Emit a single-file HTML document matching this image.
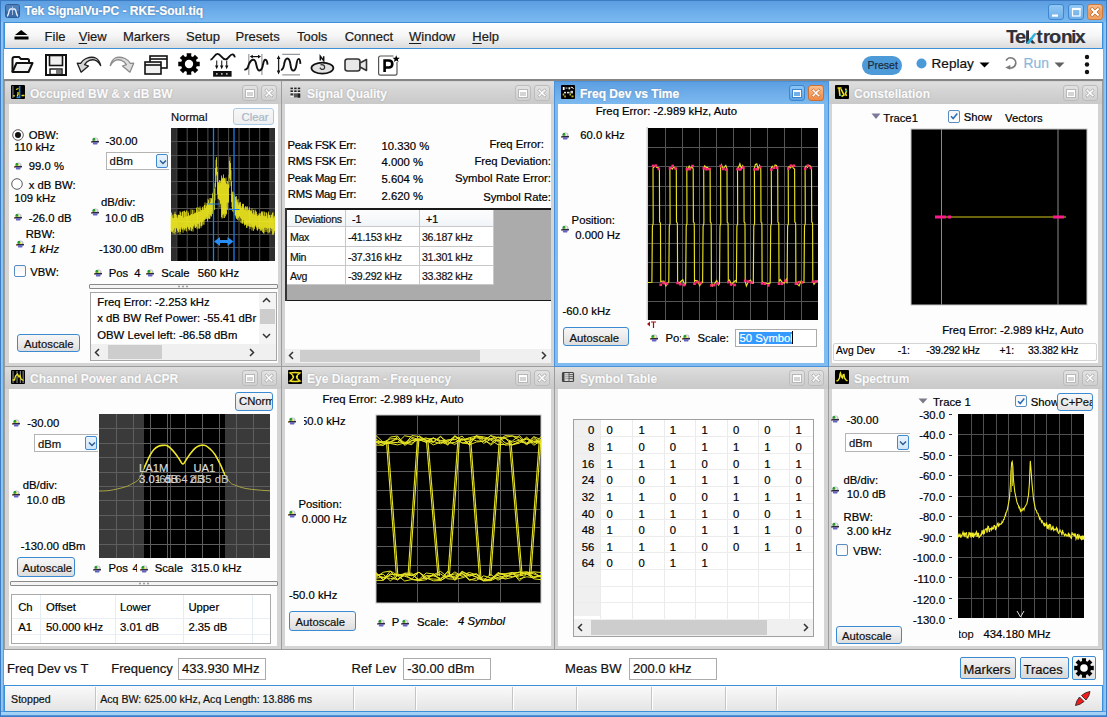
<!DOCTYPE html><html><head><meta charset="utf-8"><style>
html,body{margin:0;padding:0;}
body{width:1107px;height:717px;overflow:hidden;position:relative;background:#6aaae6;font-family:"Liberation Sans",sans-serif;}
.t{position:absolute;white-space:nowrap;line-height:1;-webkit-text-stroke:0.2px currentColor;}
svg{position:absolute;overflow:visible;}
</style></head><body>
<div style="position:absolute;left:0px;top:0px;width:1107px;height:717px;background:#6aaae6;"></div>
<div style="position:absolute;left:0px;top:22px;width:4px;height:695px;background:linear-gradient(90deg,#3c7cc4 0px,#3c7cc4 1px,#92c8f4 1px,#86c0f0 3px,#5c9ee0 3px);"></div>
<div style="position:absolute;left:1103px;top:22px;width:4px;height:695px;background:linear-gradient(90deg,#5c9ee0 0px,#86c0f0 1px,#92c8f4 3px,#3c7cc4 3px);"></div>
<div style="position:absolute;left:0px;top:711px;width:1107px;height:6px;background:linear-gradient(#5c9ee0 0px,#5c9ee0 1px,#a6d2f6 1px,#a0cef4 4px,#6aaae6 4px,#3c7cc4 5px);"></div>
<div style="position:absolute;left:0px;top:0px;width:1px;height:717px;background:#3c7cc4;"></div>
<div style="position:absolute;left:1106px;top:0px;width:1px;height:717px;background:#3c7cc4;"></div>
<div style="position:absolute;left:0px;top:0px;width:1107px;height:1px;background:#3c7cc4;"></div>
<div style="position:absolute;left:1px;top:1px;width:1105px;height:21px;background:linear-gradient(#5b9de0,#6fb0ec 60%,#7ab8ef);"></div>
<div style="position:absolute;left:4px;top:22px;width:1099px;height:689px;background:#f0f0f0;"></div>
<div style="position:absolute;left:4px;top:22px;width:1099px;height:27px;box-sizing:border-box;border:1px solid #3d8fd8;background:linear-gradient(#ffffff,#f6f6f6 50%,#dcdcdc);"></div>
<div style="position:absolute;left:4px;top:49px;width:1099px;height:31px;background:#ffffff;"></div>
<div style="position:absolute;left:4px;top:79px;width:1099px;height:571px;background:#9c9c9c;"></div>
<div style="position:absolute;left:4px;top:79px;width:1099px;height:2px;background:#858585;"></div>
<div style="position:absolute;left:5px;top:81px;width:276px;height:285px;background:#d4d4d4;"></div>
<div style="position:absolute;left:5px;top:82px;width:276px;height:22px;background:linear-gradient(#dedede,#d4d4d4 40%,#c9c9c9);"></div>
<div style="position:absolute;left:9px;top:104px;width:269px;height:259px;background:#fdfdfd;"></div>
<div class="t" style="left:30px;top:87.6px;font-size:12px;font-weight:bold;color:#fbfbfb;text-shadow:0 0 1.5px rgba(90,90,100,0.55);">Occupied BW &amp; x dB BW</div>
<svg width="16" height="16" viewBox="0 0 16 16" style="left:10px;top:84px"><rect x="1" y="1" width="14" height="14" rx="1" fill="#000"/><rect x="2.3" y="2" width="1.2" height="12" fill="#777"/><path d="M9.6 2 V13.5 H6.5" fill="none" stroke="#1e88e0" stroke-width="1.6"/><path d="M3 11.8 H5 M7.5 10.5 V12.5 M11.5 11.5 H14.5 M6 5.5 L8.5 4.5 M8 8 V11" stroke="#e8e020" stroke-width="1.3"/></svg>
<div style="position:absolute;left:242px;top:85px;width:16px;height:16px;box-sizing:border-box;border:1px solid #bcbcbc;border-radius:3px;background:linear-gradient(#e2e2e2,#d0d0d0);"><svg width="16" height="16" style="left:-1px;top:-1px"><rect x="3" y="4" width="10" height="9" fill="#b8b8b8"/><rect x="4" y="5" width="8" height="7" fill="#fff"/><rect x="5" y="7" width="6" height="4" fill="#d4d4d4"/></svg></div>
<div style="position:absolute;left:261px;top:85px;width:16px;height:16px;box-sizing:border-box;border:1px solid #bcbcbc;border-radius:3px;background:linear-gradient(#e2e2e2,#d0d0d0);"><svg width="16" height="16" style="left:-1px;top:-1px"><path d="M12.24 10.69 L10.69 12.24 L8.00 9.56 L5.31 12.24 L3.76 10.69 L6.44 8.00 L3.76 5.31 L5.31 3.76 L8.00 6.44 L10.69 3.76 L12.24 5.31 L9.56 8.00 Z" fill="#fff" stroke="#a8a8a8" stroke-width="0.9" stroke-linejoin="round"/></svg></div>
<div style="position:absolute;left:282px;top:81px;width:272px;height:285px;background:#d4d4d4;"></div>
<div style="position:absolute;left:282px;top:82px;width:272px;height:22px;background:linear-gradient(#dedede,#d4d4d4 40%,#c9c9c9);"></div>
<div style="position:absolute;left:285px;top:104px;width:266px;height:259px;background:#fdfdfd;"></div>
<div class="t" style="left:307px;top:87.6px;font-size:12px;font-weight:bold;color:#fbfbfb;text-shadow:0 0 1.5px rgba(90,90,100,0.55);">Signal Quality</div>
<svg width="16" height="16" viewBox="0 0 16 16" style="left:287px;top:84px"><rect x="3.5" y="3.6" width="2.4" height="1.6" fill="#222"/><rect x="3.5" y="6.4" width="2.4" height="1.6" fill="#222"/><rect x="7.2" y="3.6" width="2.4" height="1.6" fill="#222"/><rect x="7.2" y="6.4" width="2.4" height="1.6" fill="#222"/><rect x="10.8" y="3.6" width="2.4" height="1.6" fill="#222"/><rect x="10.8" y="6.4" width="2.4" height="1.6" fill="#222"/><rect x="3.5" y="8.2" width="9.8" height="0.9" fill="#f4f4f4"/><rect x="3.5" y="9.4" width="2.8" height="2" fill="#333"/><rect x="7" y="9.4" width="6" height="4" fill="#555"/><rect x="10.8" y="9.6" width="2.5" height="4" fill="#222"/><rect x="3.5" y="12" width="2.8" height="1" fill="#f4f4f4"/></svg>
<div style="position:absolute;left:515px;top:85px;width:16px;height:16px;box-sizing:border-box;border:1px solid #bcbcbc;border-radius:3px;background:linear-gradient(#e2e2e2,#d0d0d0);"><svg width="16" height="16" style="left:-1px;top:-1px"><rect x="3" y="4" width="10" height="9" fill="#b8b8b8"/><rect x="4" y="5" width="8" height="7" fill="#fff"/><rect x="5" y="7" width="6" height="4" fill="#d4d4d4"/></svg></div>
<div style="position:absolute;left:534px;top:85px;width:16px;height:16px;box-sizing:border-box;border:1px solid #bcbcbc;border-radius:3px;background:linear-gradient(#e2e2e2,#d0d0d0);"><svg width="16" height="16" style="left:-1px;top:-1px"><path d="M12.24 10.69 L10.69 12.24 L8.00 9.56 L5.31 12.24 L3.76 10.69 L6.44 8.00 L3.76 5.31 L5.31 3.76 L8.00 6.44 L10.69 3.76 L12.24 5.31 L9.56 8.00 Z" fill="#fff" stroke="#a8a8a8" stroke-width="0.9" stroke-linejoin="round"/></svg></div>
<div style="position:absolute;left:554px;top:81px;width:275px;height:286px;background:#4a92dc;"></div>
<div style="position:absolute;left:555px;top:82px;width:273px;height:284px;background:linear-gradient(#5ea2e4,#7ab8ee 20px,#80bcf0);"></div>
<div style="position:absolute;left:555px;top:82px;width:273px;height:22px;background:linear-gradient(#5c9fe2,#74b2ec 70%,#7cb9ee);"></div>
<div style="position:absolute;left:558px;top:104px;width:266px;height:259px;background:#fdfdfd;"></div>
<div class="t" style="left:580px;top:87.6px;font-size:12px;font-weight:bold;color:#ffffff;text-shadow:0 0 1.5px rgba(90,90,100,0.55);">Freq Dev vs Time</div>
<svg width="16" height="16" viewBox="0 0 16 16" style="left:560px;top:84px"><rect x="1" y="1" width="14" height="14" rx="1" fill="#000"/><rect x="2.8" y="3" width="1.8" height="3" fill="#fff"/><rect x="5.5" y="3.6" width="2" height="0.9" fill="#fff"/><rect x="8.5" y="3.3" width="1.5" height="2" fill="#fff"/><path d="M10.5 4 L12 3 L13.5 5" stroke="#eee" stroke-width="1" fill="none"/><rect x="4" y="7.8" width="2" height="1.6" fill="#ddd"/><rect x="7" y="7.8" width="2.5" height="1.6" fill="#ddd"/><rect x="10.5" y="6.8" width="2.5" height="2.6" fill="#ccc"/><rect x="2.7" y="9.5" width="1.5" height="2" fill="#c8c020"/><rect x="4.3" y="11.5" width="1.5" height="2" fill="#c8c020"/><rect x="9.5" y="9.5" width="1.5" height="2" fill="#c8c020"/><rect x="11.5" y="11.5" width="2" height="1.8" fill="#c8c020"/></svg>
<div style="position:absolute;left:789px;top:85px;width:16px;height:16px;box-sizing:border-box;border:1px solid #3c86d0;border-radius:3px;background:linear-gradient(#8cc6f4,#5ea4e4);"><svg width="16" height="16" style="left:-1px;top:-1px"><rect x="3" y="4" width="10" height="9" fill="#3f86cf"/><rect x="4" y="5" width="8" height="7" fill="#fff"/><rect x="5" y="7" width="6" height="4" fill="#70b0ea"/></svg></div>
<div style="position:absolute;left:808px;top:85px;width:16px;height:16px;box-sizing:border-box;border:1px solid #d07030;border-radius:3px;background:linear-gradient(#f8c090,#ec8a48);"><svg width="16" height="16" style="left:-1px;top:-1px"><path d="M12.24 10.69 L10.69 12.24 L8.00 9.56 L5.31 12.24 L3.76 10.69 L6.44 8.00 L3.76 5.31 L5.31 3.76 L8.00 6.44 L10.69 3.76 L12.24 5.31 L9.56 8.00 Z" fill="#fff" stroke="#d06a28" stroke-width="0.9" stroke-linejoin="round"/></svg></div>
<div style="position:absolute;left:829px;top:81px;width:273px;height:285px;background:#d4d4d4;"></div>
<div style="position:absolute;left:829px;top:82px;width:273px;height:22px;background:linear-gradient(#dedede,#d4d4d4 40%,#c9c9c9);"></div>
<div style="position:absolute;left:832px;top:104px;width:266px;height:259px;background:#fdfdfd;"></div>
<div class="t" style="left:854px;top:87.6px;font-size:12px;font-weight:bold;color:#fbfbfb;text-shadow:0 0 1.5px rgba(90,90,100,0.55);">Constellation</div>
<svg width="16" height="16" viewBox="0 0 16 16" style="left:834px;top:84px"><rect x="1" y="1" width="14" height="14" rx="1" fill="#000"/><path d="M3.5 4 L7.5 4 M5 4 L6 12 M7 5 L10 11 L7.5 12.5 M11.5 4.5 L12.5 7 L11.5 9.5 L12.5 12" fill="none" stroke="#f0e020" stroke-width="1.6"/><rect x="11.8" y="6" width="1.2" height="1.4" fill="#30c0a0"/><rect x="6" y="10.5" width="1.2" height="1.2" fill="#40c0a0"/></svg>
<div style="position:absolute;left:1063px;top:85px;width:16px;height:16px;box-sizing:border-box;border:1px solid #bcbcbc;border-radius:3px;background:linear-gradient(#e2e2e2,#d0d0d0);"><svg width="16" height="16" style="left:-1px;top:-1px"><rect x="3" y="4" width="10" height="9" fill="#b8b8b8"/><rect x="4" y="5" width="8" height="7" fill="#fff"/><rect x="5" y="7" width="6" height="4" fill="#d4d4d4"/></svg></div>
<div style="position:absolute;left:1082px;top:85px;width:16px;height:16px;box-sizing:border-box;border:1px solid #bcbcbc;border-radius:3px;background:linear-gradient(#e2e2e2,#d0d0d0);"><svg width="16" height="16" style="left:-1px;top:-1px"><path d="M12.24 10.69 L10.69 12.24 L8.00 9.56 L5.31 12.24 L3.76 10.69 L6.44 8.00 L3.76 5.31 L5.31 3.76 L8.00 6.44 L10.69 3.76 L12.24 5.31 L9.56 8.00 Z" fill="#fff" stroke="#a8a8a8" stroke-width="0.9" stroke-linejoin="round"/></svg></div>
<div style="position:absolute;left:5px;top:367px;width:276px;height:282px;background:#d4d4d4;"></div>
<div style="position:absolute;left:5px;top:367px;width:276px;height:22px;background:linear-gradient(#dedede,#d4d4d4 40%,#c9c9c9);"></div>
<div style="position:absolute;left:9px;top:389px;width:268px;height:257px;background:#fdfdfd;"></div>
<div class="t" style="left:30px;top:372.6px;font-size:12px;font-weight:bold;color:#fbfbfb;text-shadow:0 0 1.5px rgba(90,90,100,0.55);">Channel Power and ACPR</div>
<svg width="16" height="16" viewBox="0 0 16 16" style="left:10px;top:369px"><rect x="1" y="1" width="14" height="14" rx="1" fill="#000"/><rect x="2.5" y="2" width="1.1" height="12" fill="#888"/><rect x="6.5" y="2" width="1.1" height="12" fill="#888"/><rect x="9.8" y="2" width="1.1" height="12" fill="#888"/><rect x="12.6" y="2" width="1.1" height="12" fill="#888"/><path d="M2.5 11 H4.5 L5.5 7 L7.5 5 L9 8 L10 6.5 L11 10 L13.5 11.5" fill="none" stroke="#e8e020" stroke-width="1.3"/></svg>
<div style="position:absolute;left:242px;top:370px;width:16px;height:16px;box-sizing:border-box;border:1px solid #bcbcbc;border-radius:3px;background:linear-gradient(#e2e2e2,#d0d0d0);"><svg width="16" height="16" style="left:-1px;top:-1px"><rect x="3" y="4" width="10" height="9" fill="#b8b8b8"/><rect x="4" y="5" width="8" height="7" fill="#fff"/><rect x="5" y="7" width="6" height="4" fill="#d4d4d4"/></svg></div>
<div style="position:absolute;left:261px;top:370px;width:16px;height:16px;box-sizing:border-box;border:1px solid #bcbcbc;border-radius:3px;background:linear-gradient(#e2e2e2,#d0d0d0);"><svg width="16" height="16" style="left:-1px;top:-1px"><path d="M12.24 10.69 L10.69 12.24 L8.00 9.56 L5.31 12.24 L3.76 10.69 L6.44 8.00 L3.76 5.31 L5.31 3.76 L8.00 6.44 L10.69 3.76 L12.24 5.31 L9.56 8.00 Z" fill="#fff" stroke="#a8a8a8" stroke-width="0.9" stroke-linejoin="round"/></svg></div>
<div style="position:absolute;left:282px;top:367px;width:272px;height:282px;background:#d4d4d4;"></div>
<div style="position:absolute;left:282px;top:367px;width:272px;height:22px;background:linear-gradient(#dedede,#d4d4d4 40%,#c9c9c9);"></div>
<div style="position:absolute;left:285px;top:389px;width:266px;height:257px;background:#fdfdfd;"></div>
<div class="t" style="left:307px;top:372.6px;font-size:12px;font-weight:bold;color:#fbfbfb;text-shadow:0 0 1.5px rgba(90,90,100,0.55);">Eye Diagram - Frequency</div>
<svg width="16" height="16" viewBox="0 0 16 16" style="left:287px;top:369px"><rect x="1" y="1" width="14" height="14" rx="1" fill="#000"/><path d="M3 4 Q8 3 13 4 Q10 6 9.5 8 Q10 10 13 12 Q8 13 3 12 Q6 10 6.5 8 Q6 6 3 4 Z" fill="none" stroke="#f0e020" stroke-width="1.4"/><path d="M5.5 7.5 L7 8.5 M9.5 7.5 H11 M9.5 9 H11" stroke="#f0e020" stroke-width="1"/></svg>
<div style="position:absolute;left:515px;top:370px;width:16px;height:16px;box-sizing:border-box;border:1px solid #bcbcbc;border-radius:3px;background:linear-gradient(#e2e2e2,#d0d0d0);"><svg width="16" height="16" style="left:-1px;top:-1px"><rect x="3" y="4" width="10" height="9" fill="#b8b8b8"/><rect x="4" y="5" width="8" height="7" fill="#fff"/><rect x="5" y="7" width="6" height="4" fill="#d4d4d4"/></svg></div>
<div style="position:absolute;left:534px;top:370px;width:16px;height:16px;box-sizing:border-box;border:1px solid #bcbcbc;border-radius:3px;background:linear-gradient(#e2e2e2,#d0d0d0);"><svg width="16" height="16" style="left:-1px;top:-1px"><path d="M12.24 10.69 L10.69 12.24 L8.00 9.56 L5.31 12.24 L3.76 10.69 L6.44 8.00 L3.76 5.31 L5.31 3.76 L8.00 6.44 L10.69 3.76 L12.24 5.31 L9.56 8.00 Z" fill="#fff" stroke="#a8a8a8" stroke-width="0.9" stroke-linejoin="round"/></svg></div>
<div style="position:absolute;left:555px;top:367px;width:273px;height:282px;background:#d4d4d4;"></div>
<div style="position:absolute;left:555px;top:367px;width:273px;height:22px;background:linear-gradient(#dedede,#d4d4d4 40%,#c9c9c9);"></div>
<div style="position:absolute;left:558px;top:389px;width:266px;height:257px;background:#fdfdfd;"></div>
<div class="t" style="left:580px;top:372.6px;font-size:12px;font-weight:bold;color:#fbfbfb;text-shadow:0 0 1.5px rgba(90,90,100,0.55);">Symbol Table</div>
<svg width="16" height="16" viewBox="0 0 16 16" style="left:560px;top:369px"><rect x="2.5" y="3.5" width="11" height="9" fill="#d8d8d8" stroke="#444" stroke-width="1.2" rx="1"/><rect x="2.5" y="3.5" width="2" height="9" fill="#444"/><path d="M4.5 5.6 H13 M4.5 7.6 H13 M4.5 9.6 H13 M9 3.5 V12.5" stroke="#555" stroke-width="0.9"/><path d="M4.5 5.6 H8.5 M4.5 7.6 H8.5 M4.5 9.6 H8.5" stroke="#f8f8f8" stroke-width="0.5"/></svg>
<div style="position:absolute;left:789px;top:370px;width:16px;height:16px;box-sizing:border-box;border:1px solid #bcbcbc;border-radius:3px;background:linear-gradient(#e2e2e2,#d0d0d0);"><svg width="16" height="16" style="left:-1px;top:-1px"><rect x="3" y="4" width="10" height="9" fill="#b8b8b8"/><rect x="4" y="5" width="8" height="7" fill="#fff"/><rect x="5" y="7" width="6" height="4" fill="#d4d4d4"/></svg></div>
<div style="position:absolute;left:808px;top:370px;width:16px;height:16px;box-sizing:border-box;border:1px solid #bcbcbc;border-radius:3px;background:linear-gradient(#e2e2e2,#d0d0d0);"><svg width="16" height="16" style="left:-1px;top:-1px"><path d="M12.24 10.69 L10.69 12.24 L8.00 9.56 L5.31 12.24 L3.76 10.69 L6.44 8.00 L3.76 5.31 L5.31 3.76 L8.00 6.44 L10.69 3.76 L12.24 5.31 L9.56 8.00 Z" fill="#fff" stroke="#a8a8a8" stroke-width="0.9" stroke-linejoin="round"/></svg></div>
<div style="position:absolute;left:829px;top:367px;width:273px;height:282px;background:#d4d4d4;"></div>
<div style="position:absolute;left:829px;top:367px;width:273px;height:22px;background:linear-gradient(#dedede,#d4d4d4 40%,#c9c9c9);"></div>
<div style="position:absolute;left:832px;top:389px;width:266px;height:257px;background:#fdfdfd;"></div>
<div class="t" style="left:854px;top:372.6px;font-size:12px;font-weight:bold;color:#fbfbfb;text-shadow:0 0 1.5px rgba(90,90,100,0.55);">Spectrum</div>
<svg width="16" height="16" viewBox="0 0 16 16" style="left:834px;top:369px"><rect x="1" y="1" width="14" height="14" rx="1" fill="#000"/><path d="M2.5 12 L4 11.5 L5.5 9 L6 5 L6.5 4 L7.5 8 L8.5 9 L9 6 L10 5.5 L10.5 9 L12 11 L13.5 12" fill="none" stroke="#e8e020" stroke-width="1.4"/></svg>
<div style="position:absolute;left:1063px;top:370px;width:16px;height:16px;box-sizing:border-box;border:1px solid #bcbcbc;border-radius:3px;background:linear-gradient(#e2e2e2,#d0d0d0);"><svg width="16" height="16" style="left:-1px;top:-1px"><rect x="3" y="4" width="10" height="9" fill="#b8b8b8"/><rect x="4" y="5" width="8" height="7" fill="#fff"/><rect x="5" y="7" width="6" height="4" fill="#d4d4d4"/></svg></div>
<div style="position:absolute;left:1082px;top:370px;width:16px;height:16px;box-sizing:border-box;border:1px solid #bcbcbc;border-radius:3px;background:linear-gradient(#e2e2e2,#d0d0d0);"><svg width="16" height="16" style="left:-1px;top:-1px"><path d="M12.24 10.69 L10.69 12.24 L8.00 9.56 L5.31 12.24 L3.76 10.69 L6.44 8.00 L3.76 5.31 L5.31 3.76 L8.00 6.44 L10.69 3.76 L12.24 5.31 L9.56 8.00 Z" fill="#fff" stroke="#a8a8a8" stroke-width="0.9" stroke-linejoin="round"/></svg></div>
<svg width="15" height="14" viewBox="0 0 15 14" style="left:5px;top:4px;"><rect x="0.5" y="0.5" width="14" height="13" rx="2" fill="#3a6aa8" stroke="#2f5d96"/><rect x="1" y="1" width="13" height="6" rx="1" fill="#4f80bc"/><path d="M2 12 C4 12 3.5 5 5.5 5 L9.5 5 C11.5 5 11 12 13 12" stroke="#e8f0fa" stroke-width="1.3" fill="none"/><path d="M7.5 2.5 V11" stroke="#c8d8ee" stroke-width="0.8"/></svg>
<div class="t" style="left:24.5px;top:5.14px;font-size:12px;color:#ffffff;font-weight:bold;text-shadow:0 0 2px rgba(20,50,100,0.6);">Tek SignalVu-PC - RKE-Soul.tiq</div>
<div style="position:absolute;left:1048px;top:4px;width:16px;height:16px;box-sizing:border-box;border:1px solid #3f86cf;border-radius:3px;background:linear-gradient(#90c8f4,#6eaeea);"><svg width="16" height="16" style="left:-1px;top:-1px"><rect x="4" y="10.5" width="6" height="2.2" fill="#fff"/></svg></div>
<div style="position:absolute;left:1068px;top:4px;width:16px;height:16px;box-sizing:border-box;border:1px solid #3f86cf;border-radius:3px;background:linear-gradient(#90c8f4,#6eaeea);"><svg width="16" height="16" style="left:-1px;top:-1px"><rect x="4.5" y="4.5" width="7.5" height="7.5" fill="none" stroke="#fff" stroke-width="1.2"/><rect x="4" y="4" width="8.5" height="2" fill="#fff"/></svg></div>
<div style="position:absolute;left:1087px;top:4px;width:16px;height:16px;box-sizing:border-box;border:1px solid #c87a40;border-radius:3px;background:linear-gradient(#f6bc8c,#ee9a5c 55%,#f0a468);"><svg width="16" height="16" style="left:-1px;top:-1px"><path d="M12.77 10.86 L10.86 12.77 L8.00 9.91 L5.14 12.77 L3.23 10.86 L6.09 8.00 L3.23 5.14 L5.14 3.23 L8.00 6.09 L10.86 3.23 L12.77 5.14 L9.91 8.00 Z" fill="#fff" stroke="#c8742e" stroke-width="1" stroke-linejoin="round"/></svg></div>
<svg width="15" height="11" viewBox="0 0 15 11" style="left:14px;top:29px;"><path d="M7.2 1 L13.5 6 L1 6 Z" fill="#000"/><rect x="0.5" y="7.5" width="14" height="3" fill="#000"/></svg>
<div class="t" style="left:44.6px;top:29.50px;font-size:13px;color:#1a1a1a;font-weight:normal;">File</div>
<div class="t" style="left:78.7px;top:29.50px;font-size:13px;color:#1a1a1a;font-weight:normal;"><u style="text-decoration-thickness:1px;text-underline-offset:2px">V</u>iew</div>
<div class="t" style="left:122.9px;top:29.50px;font-size:13px;color:#1a1a1a;font-weight:normal;">Markers</div>
<div class="t" style="left:186.1px;top:29.50px;font-size:13px;color:#1a1a1a;font-weight:normal;">Setup</div>
<div class="t" style="left:235.6px;top:29.50px;font-size:13px;color:#1a1a1a;font-weight:normal;">Presets</div>
<div class="t" style="left:297px;top:29.50px;font-size:13px;color:#1a1a1a;font-weight:normal;">Tools</div>
<div class="t" style="left:344.7px;top:29.50px;font-size:13px;color:#1a1a1a;font-weight:normal;">Connect</div>
<div class="t" style="left:409px;top:29.50px;font-size:13px;color:#1a1a1a;font-weight:normal;"><u style="text-decoration-thickness:1px;text-underline-offset:2px">W</u>indow</div>
<div class="t" style="left:472.3px;top:29.50px;font-size:13px;color:#1a1a1a;font-weight:normal;"><u style="text-decoration-thickness:1px;text-underline-offset:2px">H</u>elp</div>
<div class="t" style="left:1006.2px;top:27.99px;font-size:18.2px;color:#2e3139;font-weight:bold;transform:scaleX(1.0);transform-origin:0 0;">T</div>
<div class="t" style="left:1014.9px;top:27.99px;font-size:18.2px;color:#2e3139;font-weight:bold;transform:scaleX(1.1);transform-origin:0 0;">e</div>
<div class="t" style="left:1036.5px;top:27.99px;font-size:18.2px;color:#2e3139;font-weight:bold;transform:scaleX(1.0);transform-origin:0 0;">t</div>
<div class="t" style="left:1043px;top:27.99px;font-size:18.2px;color:#2e3139;font-weight:bold;transform:scaleX(1.0);transform-origin:0 0;">r</div>
<div class="t" style="left:1049.4px;top:27.99px;font-size:18.2px;color:#2e3139;font-weight:bold;transform:scaleX(1.1);transform-origin:0 0;">o</div>
<div class="t" style="left:1061.3px;top:27.99px;font-size:18.2px;color:#2e3139;font-weight:bold;transform:scaleX(1.05);transform-origin:0 0;">n</div>
<div class="t" style="left:1071.3px;top:27.99px;font-size:18.2px;color:#2e3139;font-weight:bold;transform:scaleX(1.0);transform-origin:0 0;">i</div>
<div class="t" style="left:1075.2px;top:27.99px;font-size:18.2px;color:#2e3139;font-weight:bold;transform:scaleX(1.05);transform-origin:0 0;">x</div>
<svg width="14" height="15" viewBox="0 0 14 15" style="left:1025px;top:29.6px;"><rect x="1.1" y="0.4" width="2.9" height="13.2" fill="#2e3139"/><path d="M5.4 7.8 L10.5 13.6 H7 L4 10 Z" fill="#2e3139"/><path d="M1.1 13.6 L4.7 13.6 L11.9 3.3 L9 3.3 Z" fill="#2cb4e0"/></svg>
<svg width="23" height="19" viewBox="0 0 23 19" style="left:11px;top:55px;"><path d="M1.5 17 V4 Q1.5 2 3.5 2 H8 L10 4 H16.5 Q18 4 18 5.5 V7" fill="none" stroke="#111" stroke-width="2"/><path d="M1.5 17 L5.5 8 H21.5 L17.5 17 Z" fill="#f2f2f2" stroke="#111" stroke-width="2" stroke-linejoin="round"/></svg>
<svg width="22" height="22" viewBox="0 0 22 22" style="left:45px;top:54px;"><rect x="1" y="1" width="20" height="20" fill="#fff" stroke="#111" stroke-width="2"/><rect x="4.5" y="1.5" width="13" height="10" fill="#efefef" stroke="#111" stroke-width="1.6"/><rect x="5" y="15" width="12" height="5.5" fill="#fff" stroke="#111" stroke-width="1.4"/><rect x="11" y="16" width="5" height="4" fill="#777"/></svg>
<svg width="26" height="20" viewBox="0 0 26 20" style="left:77px;top:55px;"><path d="M23.7 10.6 Q21 -1 9 3.5 Q5 5.5 3.6 8.4 L0.3 8.2 L4.1 17.2 L11.5 11 L7.6 9.6 Q9.5 6.5 12.5 5.3 Q19.5 3 23.7 10.6 Z" fill="#d4d4d4" stroke="#1e1e1e" stroke-width="1.3" stroke-linejoin="round"/></svg>
<svg width="26" height="20" viewBox="0 0 26 20" style="left:110px;top:55px;"><path d="M0.3 10.6 Q3 -1 15 3.5 Q19 5.5 20.4 8.4 L23.7 8.2 L19.9 17.2 L12.5 11 L16.4 9.6 Q14.5 6.5 11.5 5.3 Q4.5 3 0.3 10.6 Z" fill="#dedede" stroke="#8c8c8c" stroke-width="1.3" stroke-linejoin="round"/></svg>
<svg width="24" height="20" viewBox="0 0 24 20" style="left:144px;top:55px;"><rect x="6" y="1" width="17" height="12" fill="#fff" stroke="#111" stroke-width="1.6"/><line x1="6" y1="4" x2="23" y2="4" stroke="#111" stroke-width="1.6"/><rect x="1" y="7" width="16" height="12" fill="#f0f0f0" stroke="#111" stroke-width="1.6"/><line x1="1" y1="10" x2="17" y2="10" stroke="#111" stroke-width="1.6"/></svg>
<svg width="24" height="22" viewBox="0 0 24 22" style="left:177px;top:53px;"><path d="M19.71 8.87 L22.74 8.64 L22.74 13.36 L19.71 13.13 L18.96 14.94 L21.26 16.93 L17.93 20.26 L15.94 17.96 L14.13 18.71 L14.36 21.74 L9.64 21.74 L9.87 18.71 L8.06 17.96 L6.07 20.26 L2.74 16.93 L5.04 14.94 L4.29 13.13 L1.26 13.36 L1.26 8.64 L4.29 8.87 L5.04 7.06 L2.74 5.07 L6.07 1.74 L8.06 4.04 L9.87 3.29 L9.64 0.26 L14.36 0.26 L14.13 3.29 L15.94 4.04 L17.93 1.74 L21.26 5.07 L18.96 7.06 Z" fill="#000"/><circle cx="12" cy="11" r="7.5" fill="#000"/><circle cx="12" cy="11" r="4.2" fill="#fff"/></svg>
<svg width="28" height="26" viewBox="0 0 28 26" style="left:209px;top:51px;"><path d="M1.4 8.6 C4 8.8 5.5 2.8 8.6 2.9 C12 3 13 8.6 16.5 8.4 C20 8.2 20.5 3 23.5 3.3 C25 3.5 25.6 5 25.9 6.4" fill="none" stroke="#111" stroke-width="1.8"/><path d="M7.7 9.5 V15 M12.7 9.5 V15 M17.7 9.5 V15" stroke="#333" stroke-width="1.2"/><path d="M6 14.5 L7.7 18.3 L9.4 14.5 Z M11 14.5 L12.7 18.3 L14.4 14.5 Z M16 14.5 L17.7 18.3 L19.4 14.5 Z" fill="#111"/><rect x="4.1" y="20" width="18.5" height="5.7" fill="#111"/><rect x="7" y="22.2" width="1.6" height="1.4" fill="#ddd"/><rect x="12" y="22.2" width="1.6" height="1.4" fill="#ddd"/><rect x="17" y="22.2" width="1.6" height="1.4" fill="#ddd"/></svg>
<svg width="26" height="26" viewBox="0 0 26 26" style="left:243px;top:51px;"><path d="M5.8 2.9 V24.1 M18.9 2.9 V24.1" stroke="#999" stroke-width="1.2"/><path d="M1.3 18.6 Q4.5 19 5.6 14 Q7.5 8.6 10.5 8.7 Q12.5 8.8 13.5 14.5 Q14.5 19.6 16.5 19.5 Q19 19.4 20 13.5 Q21 8.6 22.5 8.8 Q24 9 24.6 13.6" fill="none" stroke="#111" stroke-width="1.9"/><path d="M8.5 5.6 H16.3" stroke="#111" stroke-width="1.2"/><path d="M6.8 5.6 L9.8 3.8 V7.4 Z M18 5.6 L15 3.8 V7.4 Z" fill="#111"/></svg>
<svg width="26" height="26" viewBox="0 0 26 26" style="left:277px;top:51px;"><path d="M5.2 3.3 H23 M5.2 23.9 H23" stroke="#999" stroke-width="1.3"/><path d="M1.6 7 V21" stroke="#222" stroke-width="1.3"/><path d="M1.6 4.2 L-0.2 8 H3.4 Z M1.6 23.4 L-0.2 19.6 H3.4 Z" fill="#111"/><path d="M3.9 18.7 Q6 19 7 14 Q8 7.4 10.5 7.5 Q12.8 7.6 13.5 14 Q14.3 19.6 16.2 19.6 Q18.6 19.5 19.5 13.5 Q20.3 7.7 21.8 7.9 Q23 8.1 23.4 12.8" fill="none" stroke="#111" stroke-width="1.9"/></svg>
<svg width="25" height="24" viewBox="0 0 25 24" style="left:310px;top:52px;"><ellipse cx="12.4" cy="16.1" rx="11" ry="5.5" fill="#e2e2e2" stroke="#111" stroke-width="1.7"/><path d="M10.3 8.6 V4.2 L13.7 8.6 V4.2" fill="none" stroke="#111" stroke-width="1.5" stroke-linejoin="miter"/><path d="M10.5 12.8 Q14.5 12.2 14.6 15.2 Q14.6 17.6 11.5 17.4 L9.8 15.8" fill="none" stroke="#333" stroke-width="1.3"/></svg>
<svg width="24" height="14" viewBox="0 0 24 14" style="left:344px;top:58px;"><rect x="1" y="1" width="15" height="12" rx="2.5" fill="#e8e8e8" stroke="#333" stroke-width="1.6"/><path d="M16 5 L22.5 1.5 V12.5 L16 9 Z" fill="#e8e8e8" stroke="#333" stroke-width="1.6" stroke-linejoin="round"/></svg>
<svg width="23" height="22" viewBox="0 0 23 22" style="left:378px;top:55px;"><path d="M15.5 1 H2.5 Q0.6 1 0.6 2.9 V18.2 Q0.6 20.1 2.5 20.1 H17.1 Q19 20.1 19 18.2 V7" fill="#fff" stroke="#555" stroke-width="1.2"/><path d="M6.6 17 V5.5 H10.8 Q14.3 5.5 14.3 9 Q14.3 12.5 10.8 12.5 H6.6" fill="none" stroke="#000" stroke-width="2.6"/><path d="M18.2 0.3 L19.2 2.7 L21.8 2.8 L19.8 4.4 L20.5 6.9 L18.2 5.5 L15.9 6.9 L16.6 4.4 L14.6 2.8 L17.2 2.7 Z" fill="#000"/></svg>
<div style="position:absolute;left:861.5px;top:55.5px;width:40px;height:19px;border-radius:10px;background:#4c9ad8;"></div>
<div class="t" style="left:867.5px;top:60.41px;font-size:10.5px;color:#1c2a3a;font-weight:normal;">Preset</div>
<svg width="11" height="11" viewBox="0 0 11 11" style="left:916px;top:58px;"><circle cx="5.5" cy="5.5" r="5" fill="#4a9ad8"/></svg>
<div class="t" style="left:931.5px;top:57.09px;font-size:13.6px;color:#111;font-weight:normal;">Replay</div>
<svg width="11" height="6" viewBox="0 0 11 6" style="left:979px;top:62px;"><path d="M0.5 0.5 H10.5 L5.5 5.5 Z" fill="#000"/></svg>
<svg width="14" height="14" viewBox="0 0 14 14" style="left:1004px;top:56px;"><path d="M2.1 4.6 A5.1 5.1 0 1 1 5.2 11.8" fill="none" stroke="#7a7a7a" stroke-width="1.7"/><path d="M1.2 11.4 L6.4 9 L6.3 13.8 Z" fill="#7a7a7a"/></svg>
<div class="t" style="left:1023.5px;top:57.22px;font-size:13.8px;color:#8cb8dc;font-weight:normal;">Run</div>
<svg width="11" height="6" viewBox="0 0 11 6" style="left:1053.5px;top:62px;"><path d="M0.5 0.5 H10.5 L5.5 5.5 Z" fill="#606060"/></svg>
<svg width="6" height="22" viewBox="0 0 6 22" style="left:1084px;top:54px;"><circle cx="3" cy="3" r="2.2" fill="#111"/><circle cx="3" cy="10.5" r="2.2" fill="#111"/><circle cx="3" cy="18" r="2.2" fill="#111"/></svg>
<div class="t" style="left:171px;top:111.83px;font-size:11.3px;color:#111;font-weight:normal;">Normal</div>
<div style="position:absolute;left:233px;top:107.5px;width:41px;height:17px;box-sizing:border-box;border:1px solid #a9cbe8;border-radius:3px;background:linear-gradient(#f8f8f8,#eeeeee);"></div>
<div class="t" style="left:241.5px;top:111.73px;font-size:11.3px;color:#a8b8c8;font-weight:normal;">Clear</div>
<svg width="12" height="12" viewBox="0 0 12 12" style="left:11.5px;top:128.5px;"><circle cx="6" cy="6" r="5.3" fill="#fff" stroke="#5a5a5a" stroke-width="1"/><circle cx="6" cy="6" r="3" fill="#111"/></svg>
<div class="t" style="left:28.8px;top:129.63px;font-size:11.3px;color:#000;font-weight:normal;">OBW:</div>
<div class="t" style="left:14.3px;top:142.43px;font-size:11.3px;color:#000;font-weight:normal;">110 kHz</div>
<svg width="8" height="8" viewBox="0 0 8 8" style="left:14px;top:161.5px;"><ellipse cx="4.3" cy="3.4" rx="3.2" ry="3" fill="#b4b8c4"/><ellipse cx="4.8" cy="2.6" rx="1.6" ry="1.3" fill="#e8eaf0"/><circle cx="3" cy="2.4" r="1.4" fill="#1c9a22"/><circle cx="4.4" cy="3.2" r="0.8" fill="#e4e040"/><rect x="0" y="4.1" width="8" height="1.3" fill="#1a1a34"/><rect x="0" y="4.1" width="1.2" height="1.3" fill="#a07030"/><path d="M1.6 5.4 H6.8 L6.2 7.4 H2.2 Z" fill="#6464c8"/></svg>
<div class="t" style="left:28.8px;top:160.63px;font-size:11.3px;color:#000;font-weight:normal;">99.0 %</div>
<svg width="12" height="12" viewBox="0 0 12 12" style="left:11.399999999999999px;top:178.2px;"><circle cx="6" cy="6" r="5.3" fill="#fff" stroke="#5a5a5a" stroke-width="1"/></svg>
<div class="t" style="left:28.8px;top:179.93px;font-size:11.3px;color:#000;font-weight:normal;">x dB BW:</div>
<div class="t" style="left:14.3px;top:192.83px;font-size:11.3px;color:#000;font-weight:normal;">109 kHz</div>
<svg width="8" height="8" viewBox="0 0 8 8" style="left:14px;top:213.0px;"><ellipse cx="4.3" cy="3.4" rx="3.2" ry="3" fill="#b4b8c4"/><ellipse cx="4.8" cy="2.6" rx="1.6" ry="1.3" fill="#e8eaf0"/><circle cx="3" cy="2.4" r="1.4" fill="#1c9a22"/><circle cx="4.4" cy="3.2" r="0.8" fill="#e4e040"/><rect x="0" y="4.1" width="8" height="1.3" fill="#1a1a34"/><rect x="0" y="4.1" width="1.2" height="1.3" fill="#a07030"/><path d="M1.6 5.4 H6.8 L6.2 7.4 H2.2 Z" fill="#6464c8"/></svg>
<div class="t" style="left:28.8px;top:212.53px;font-size:11.3px;color:#000;font-weight:normal;">-26.0 dB</div>
<div class="t" style="left:25.7px;top:228.93px;font-size:11.3px;color:#000;font-weight:normal;">RBW:</div>
<svg width="8" height="8" viewBox="0 0 8 8" style="left:15.600000000000001px;top:239.5px;"><ellipse cx="4.3" cy="3.4" rx="3.2" ry="3" fill="#b4b8c4"/><ellipse cx="4.8" cy="2.6" rx="1.6" ry="1.3" fill="#e8eaf0"/><circle cx="3" cy="2.4" r="1.4" fill="#1c9a22"/><circle cx="4.4" cy="3.2" r="0.8" fill="#e4e040"/><rect x="0" y="4.1" width="8" height="1.3" fill="#1a1a34"/><rect x="0" y="4.1" width="1.2" height="1.3" fill="#a07030"/><path d="M1.6 5.4 H6.8 L6.2 7.4 H2.2 Z" fill="#6464c8"/></svg>
<div class="t" style="left:30.2px;top:243.93px;font-size:11.3px;color:#000;font-weight:normal;"><i>1 kHz</i></div>
<div style="position:absolute;left:14px;top:265px;width:12px;height:12px;box-sizing:border-box;border:1px solid #5a8cc4;border-radius:2px;background:linear-gradient(#f4f4f4,#ffffff);"></div>
<div class="t" style="left:30.2px;top:267.33px;font-size:11.3px;color:#000;font-weight:normal;">VBW:</div>
<svg width="8" height="8" viewBox="0 0 8 8" style="left:91px;top:136.8px;"><ellipse cx="4.3" cy="3.4" rx="3.2" ry="3" fill="#b4b8c4"/><ellipse cx="4.8" cy="2.6" rx="1.6" ry="1.3" fill="#e8eaf0"/><circle cx="3" cy="2.4" r="1.4" fill="#1c9a22"/><circle cx="4.4" cy="3.2" r="0.8" fill="#e4e040"/><rect x="0" y="4.1" width="8" height="1.3" fill="#1a1a34"/><rect x="0" y="4.1" width="1.2" height="1.3" fill="#a07030"/><path d="M1.6 5.4 H6.8 L6.2 7.4 H2.2 Z" fill="#6464c8"/></svg>
<div class="t" style="left:105.6px;top:135.73px;font-size:11.3px;color:#000;font-weight:normal;">-30.00</div>
<div style="position:absolute;left:105.5px;top:151.5px;width:63.5px;height:18.0px;box-sizing:border-box;border:1px solid #b4b4b4;border-right:none;background:#fff;"></div>
<div style="position:absolute;left:156px;top:153.5px;width:12px;height:14.0px;box-sizing:border-box;border:1px solid #3f8ad2;border-radius:2px;background:linear-gradient(#eaf4fc,#cfe6f8);"><svg width="10" height="10" style="left:0.5px;top:2px"><path d="M2 3.5 L5 6.5 L8 3.5" fill="none" stroke="#2a5a90" stroke-width="1.4"/></svg></div>
<div class="t" style="left:109.6px;top:156.13px;font-size:11.3px;color:#111;font-weight:normal;">dBm</div>
<div class="t" style="left:100.9px;top:197.13px;font-size:11.3px;color:#000;font-weight:normal;">dB/div:</div>
<svg width="8" height="8" viewBox="0 0 8 8" style="left:90.5px;top:208.3px;"><ellipse cx="4.3" cy="3.4" rx="3.2" ry="3" fill="#b4b8c4"/><ellipse cx="4.8" cy="2.6" rx="1.6" ry="1.3" fill="#e8eaf0"/><circle cx="3" cy="2.4" r="1.4" fill="#1c9a22"/><circle cx="4.4" cy="3.2" r="0.8" fill="#e4e040"/><rect x="0" y="4.1" width="8" height="1.3" fill="#1a1a34"/><rect x="0" y="4.1" width="1.2" height="1.3" fill="#a07030"/><path d="M1.6 5.4 H6.8 L6.2 7.4 H2.2 Z" fill="#6464c8"/></svg>
<div class="t" style="left:105.1px;top:212.53px;font-size:11.3px;color:#000;font-weight:normal;">10.0 dB</div>
<div class="t" style="left:99px;top:244.33px;font-size:11.3px;color:#000;font-weight:normal;">-130.00 dBm</div>
<svg width="8" height="8" viewBox="0 0 8 8" style="left:94.2px;top:269.2px;"><ellipse cx="4.3" cy="3.4" rx="3.2" ry="3" fill="#b4b8c4"/><ellipse cx="4.8" cy="2.6" rx="1.6" ry="1.3" fill="#e8eaf0"/><circle cx="3" cy="2.4" r="1.4" fill="#1c9a22"/><circle cx="4.4" cy="3.2" r="0.8" fill="#e4e040"/><rect x="0" y="4.1" width="8" height="1.3" fill="#1a1a34"/><rect x="0" y="4.1" width="1.2" height="1.3" fill="#a07030"/><path d="M1.6 5.4 H6.8 L6.2 7.4 H2.2 Z" fill="#6464c8"/></svg>
<div class="t" style="left:108.8px;top:268.13px;font-size:11.3px;color:#000;font-weight:normal;">Pos</div>
<div class="t" style="left:134.2px;top:268.13px;font-size:11.3px;color:#000;font-weight:normal;">4:</div>
<div style="position:absolute;left:141px;top:266px;width:7px;height:13px;background:#fdfdfd;"></div>
<svg width="8" height="8" viewBox="0 0 8 8" style="left:146.1px;top:269.2px;"><ellipse cx="4.3" cy="3.4" rx="3.2" ry="3" fill="#b4b8c4"/><ellipse cx="4.8" cy="2.6" rx="1.6" ry="1.3" fill="#e8eaf0"/><circle cx="3" cy="2.4" r="1.4" fill="#1c9a22"/><circle cx="4.4" cy="3.2" r="0.8" fill="#e4e040"/><rect x="0" y="4.1" width="8" height="1.3" fill="#1a1a34"/><rect x="0" y="4.1" width="1.2" height="1.3" fill="#a07030"/><path d="M1.6 5.4 H6.8 L6.2 7.4 H2.2 Z" fill="#6464c8"/></svg>
<div class="t" style="left:161.3px;top:268.13px;font-size:11.3px;color:#000;font-weight:normal;">Scale</div>
<div class="t" style="left:197.7px;top:268.13px;font-size:11.3px;color:#000;font-weight:normal;">560 kHz</div>
<div style="position:absolute;left:88.5px;top:283.5px;width:189.0px;height:5px;box-sizing:border-box;border:1px solid #8a8a8a;border-radius:1px;background:#f4f4f4;"></div>
<svg width="12" height="3" viewBox="0 0 12 3" style="left:177.0px;top:284.5px;"><circle cx="2" cy="1.5" r="1" fill="#9a9a9a"/><circle cx="6" cy="1.5" r="1" fill="#9a9a9a"/><circle cx="10" cy="1.5" r="1" fill="#9a9a9a"/></svg>
<div style="position:absolute;left:89.5px;top:291.5px;width:187px;height:69.5px;box-sizing:border-box;border:1px solid #a5a5a5;background:#fff;"></div>
<div class="t" style="left:97.3px;top:296.83px;font-size:11.3px;color:#000;font-weight:normal;">Freq Error: -2.253 kHz</div>
<div class="t" style="left:97.3px;top:313.23px;font-size:11.3px;color:#000;font-weight:normal;">x dB BW Ref Power: -55.41 dBr</div>
<div class="t" style="left:97.3px;top:329.73px;font-size:11.3px;color:#000;font-weight:normal;">OBW Level left: -86.58 dBm</div>
<div style="position:absolute;left:258.5px;top:292.5px;width:17px;height:51px;background:#f4f4f4;"></div>
<div style="position:absolute;left:259.5px;top:308.5px;width:15px;height:15.5px;background:#cdcdcd;"></div>
<svg width="9" height="6" viewBox="0 0 9 6" style="left:262px;top:297px;"><path d="M1 5 L4.5 1.5 L8 5" fill="none" stroke="#333" stroke-width="1.5"/></svg>
<svg width="9" height="6" viewBox="0 0 9 6" style="left:262px;top:333px;"><path d="M1 1 L4.5 4.5 L8 1" fill="none" stroke="#333" stroke-width="1.5"/></svg>
<div style="position:absolute;left:90.5px;top:344px;width:168.0px;height:16px;background:#f0f0f0;"></div>
<div style="position:absolute;left:107.5px;top:345px;width:54.5px;height:14px;background:#cdcdcd;"></div>
<svg width="6" height="9" viewBox="0 0 6 9" style="left:93.5px;top:347.5px;"><path d="M5 1 L1.5 4.5 L5 8" fill="none" stroke="#333" stroke-width="1.5"/></svg>
<svg width="6" height="9" viewBox="0 0 6 9" style="left:248.5px;top:347.5px;"><path d="M1 1 L4.5 4.5 L1 8" fill="none" stroke="#333" stroke-width="1.5"/></svg>
<div style="position:absolute;left:258.5px;top:344px;width:17px;height:16px;background:#f0f0f0;"></div>
<div style="position:absolute;left:16.5px;top:333.5px;width:63.0px;height:18.5px;box-sizing:border-box;border:1px solid #3c8ad2;border-radius:3px;background:linear-gradient(#f6f6f6,#ececec 50%,#dcdcdc);"></div>
<div class="t" style="left:24px;top:338.53px;font-size:11.3px;color:#111;font-weight:normal;">Autoscale</div>
<svg width="104" height="133" viewBox="0 0 104 133" style="left:171px;top:127.5px;"><rect x="0" y="0" width="104" height="133" fill="#000"/><rect x="0" y="0" width="5" height="133" fill="#2e2e2e"/><rect x="99.5" y="0" width="4.5" height="133" fill="#2e2e2e"/><line x1="5.8" y1="0" x2="5.8" y2="133" stroke="#505050" stroke-width="1"/><line x1="16.2" y1="0" x2="16.2" y2="133" stroke="#505050" stroke-width="1"/><line x1="26.5" y1="0" x2="26.5" y2="133" stroke="#505050" stroke-width="1"/><line x1="36.9" y1="0" x2="36.9" y2="133" stroke="#505050" stroke-width="1"/><line x1="47.2" y1="0" x2="47.2" y2="133" stroke="#505050" stroke-width="1"/><line x1="57.6" y1="0" x2="57.6" y2="133" stroke="#505050" stroke-width="1"/><line x1="68.0" y1="0" x2="68.0" y2="133" stroke="#505050" stroke-width="1"/><line x1="78.3" y1="0" x2="78.3" y2="133" stroke="#505050" stroke-width="1"/><line x1="88.7" y1="0" x2="88.7" y2="133" stroke="#505050" stroke-width="1"/><line x1="99.0" y1="0" x2="99.0" y2="133" stroke="#505050" stroke-width="1"/><line x1="0" y1="13.5" x2="104" y2="13.5" stroke="#505050" stroke-width="1"/><line x1="0" y1="27.5" x2="104" y2="27.5" stroke="#505050" stroke-width="1"/><line x1="0" y1="40.5" x2="104" y2="40.5" stroke="#505050" stroke-width="1"/><line x1="0" y1="53.5" x2="104" y2="53.5" stroke="#505050" stroke-width="1"/><line x1="0" y1="66.5" x2="104" y2="66.5" stroke="#505050" stroke-width="1"/><line x1="0" y1="80.5" x2="104" y2="80.5" stroke="#505050" stroke-width="1"/><line x1="0" y1="93.5" x2="104" y2="93.5" stroke="#505050" stroke-width="1"/><line x1="0" y1="106.5" x2="104" y2="106.5" stroke="#505050" stroke-width="1"/><line x1="0" y1="119.5" x2="104" y2="119.5" stroke="#505050" stroke-width="1"/><path d="M0.0 87.8V103.9M0.5 84.5V103.2M1.0 87.4V104.0M1.5 89.6V103.5M2.0 86.4V105.4M2.5 90.1V101.9M3.0 90.1V105.4M3.5 85.9V100.0M4.0 83.8V106.4M4.5 86.0V103.9M5.0 89.5V99.7M5.5 86.8V99.9M6.0 89.1V101.2M6.5 90.2V102.7M7.0 87.3V105.3M7.5 86.7V103.8M8.0 86.8V103.9M8.5 87.0V101.1M9.0 83.2V106.1M9.5 84.2V104.0M10.0 87.8V100.6M10.5 87.9V99.4M11.0 84.5V101.7M11.5 83.9V101.5M12.0 83.0V104.7M12.5 89.6V100.1M13.0 83.2V101.9M13.5 82.6V101.3M14.0 88.9V102.8M14.5 83.9V100.2M15.0 88.6V100.6M15.5 82.4V103.4M16.0 88.2V99.8M16.5 88.2V98.4M17.0 83.3V99.1M17.5 84.8V100.9M18.0 87.3V102.7M18.5 87.6V102.0M19.0 87.6V100.3M19.5 86.8V99.1M20.0 81.3V102.7M20.5 85.9V103.2M21.0 86.4V99.6M21.5 81.7V101.2M22.0 86.8V103.5M22.5 85.9V98.2M23.0 81.8V98.5M23.5 85.0V96.6M24.0 86.2V99.9M24.5 85.0V99.9M25.0 83.9V98.7M25.5 79.6V98.7M26.0 82.0V101.1M26.5 84.6V95.9M27.0 79.2V100.3M27.5 83.6V95.7M28.0 79.9V100.7M28.5 83.5V100.5M29.0 78.4V97.8M29.5 81.3V94.0M30.0 83.7V99.7M30.5 82.0V97.6M31.0 81.5V98.1M31.5 78.8V94.0M32.0 81.3V96.6M32.5 81.7V92.8M33.0 77.8V96.7M33.5 77.0V92.3M34.0 74.5V91.3M34.5 80.3V91.3M35.0 76.8V89.3M35.5 78.1V91.0M36.0 74.8V88.7M36.5 75.7V93.5M37.0 70.8V91.2M37.5 72.2V90.1M38.0 75.4V85.6M38.5 75.5V91.0M39.0 70.0V90.6M39.5 74.0V87.6M40.0 70.0V87.4M40.5 70.3V88.5M41.0 71.1V84.4M41.5 65.6V86.0M42.0 64.6V83.7M42.5 63.3V84.2M43.0 65.3V81.6M43.5 60.5V81.9M44.0 55.0V72.4M44.5 40.2V59.2M45.0 31.7V47.8M45.5 29.1V46.5M46.0 39.0V53.1M46.5 44.0V66.1M47.0 54.2V71.0M47.5 54.3V70.4M48.0 56.8V71.6M48.5 52.3V72.2M49.0 52.2V79.7M49.5 54.8V76.1M50.0 53.1V75.2M50.5 47.5V89.0M51.0 50.4V90.5M51.5 50.4V86.9M52.0 49.5V90.1M52.5 46.4V86.0M53.0 51.3V87.5M53.5 50.0V90.0M54.0 50.7V85.2M54.5 54.1V88.4M55.0 49.5V85.8M55.5 55.6V86.4M56.0 56.3V75.0M56.5 53.0V82.1M57.0 57.1V73.7M57.5 56.2V74.7M58.0 46.7V60.0M58.5 32.8V50.4M59.0 28.7V47.3M59.5 35.0V52.3M60.0 42.2V58.2M60.5 53.5V74.1M61.0 66.1V79.2M61.5 63.6V83.4M62.0 66.4V82.0M62.5 63.8V84.5M63.0 64.3V83.1M63.5 67.2V82.2M64.0 67.6V87.4M64.5 69.0V87.5M65.0 72.8V89.6M65.5 68.2V90.9M66.0 72.0V90.3M66.5 74.2V91.8M67.0 71.1V88.6M67.5 77.2V89.9M68.0 74.5V92.7M68.5 75.5V88.1M69.0 73.8V88.9M69.5 74.4V90.2M70.0 78.2V95.0M70.5 80.0V91.0M71.0 77.8V95.5M71.5 76.0V95.7M72.0 75.6V94.7M72.5 76.0V92.2M73.0 81.5V95.7M73.5 81.3V97.5M74.0 79.2V96.4M74.5 78.1V96.9M75.0 82.1V96.0M75.5 78.7V99.9M76.0 83.4V99.8M76.5 78.4V97.8M77.0 81.4V95.8M77.5 81.9V98.2M78.0 81.6V95.1M78.5 79.3V98.7M79.0 83.5V100.9M79.5 82.6V99.0M80.0 81.9V96.2M80.5 83.1V98.8M81.0 80.4V102.5M81.5 85.4V99.6M82.0 86.5V99.5M82.5 81.9V102.9M83.0 84.4V98.9M83.5 86.5V101.2M84.0 81.5V97.9M84.5 82.7V97.3M85.0 86.9V98.9M85.5 83.6V99.7M86.0 86.0V101.9M86.5 87.9V102.8M87.0 87.9V101.3M87.5 87.1V99.2M88.0 85.2V101.0M88.5 86.4V101.0M89.0 85.5V99.3M89.5 87.8V102.7M90.0 84.9V102.0M90.5 83.5V102.7M91.0 83.5V100.1M91.5 84.4V104.3M92.0 83.3V100.9M92.5 87.5V105.2M93.0 88.3V105.8M93.5 83.7V99.8M94.0 88.3V104.0M94.5 88.2V99.7M95.0 84.3V102.0M95.5 84.6V100.0M96.0 87.4V104.0M96.5 90.1V100.7M97.0 85.5V105.7M97.5 83.6V100.2M98.0 86.9V104.7M98.5 87.0V104.3M99.0 89.2V100.0M99.5 89.8V99.8M100.0 86.8V103.2M100.5 86.7V100.7M101.0 89.4V101.1M101.5 84.9V106.7M102.0 84.3V100.5M102.5 90.4V106.5M103.0 87.7V105.2M103.5 88.6V103.2" stroke="#f4ee22" stroke-width="0.75" fill="none"/><line x1="42.5" y1="0" x2="42.5" y2="133" stroke="#1e7ee8" stroke-width="1.3"/><line x1="63" y1="0" x2="63" y2="133" stroke="#1e7ee8" stroke-width="1.3"/><line x1="37" y1="76" x2="48" y2="76" stroke="#1e7ee8" stroke-width="1"/><line x1="57.5" y1="81.5" x2="68.5" y2="81.5" stroke="#1e7ee8" stroke-width="1"/><path d="M43 113.5 L49 109 V118 Z M62.5 113.5 L56.5 109 V118 Z" fill="#2a8cf0"/><rect x="48" y="112" width="9" height="3" fill="#2a8cf0"/></svg>
<div class="t" style="right:751px;top:139.83px;font-size:11.3px;color:#000;font-weight:normal;text-align:right;letter-spacing:-0.28px">Peak FSK Err:</div>
<div class="t" style="left:381.5px;top:141.03px;font-size:11.3px;color:#000;font-weight:normal;">10.330 %</div>
<div class="t" style="right:751px;top:156.23px;font-size:11.3px;color:#000;font-weight:normal;text-align:right;letter-spacing:-0.28px">RMS FSK Err:</div>
<div class="t" style="left:381.5px;top:157.43px;font-size:11.3px;color:#000;font-weight:normal;">4.000 %</div>
<div class="t" style="right:751px;top:173.03px;font-size:11.3px;color:#000;font-weight:normal;text-align:right;letter-spacing:-0.28px">Peak Mag Err:</div>
<div class="t" style="left:381.5px;top:174.23px;font-size:11.3px;color:#000;font-weight:normal;">5.604 %</div>
<div class="t" style="right:751px;top:189.43px;font-size:11.3px;color:#000;font-weight:normal;text-align:right;letter-spacing:-0.28px">RMS Mag Err:</div>
<div class="t" style="left:381.5px;top:190.63px;font-size:11.3px;color:#000;font-weight:normal;">2.620 %</div>
<div class="t" style="right:563px;top:138.73px;font-size:11.3px;color:#000;font-weight:normal;text-align:right;">Freq Error:</div>
<div class="t" style="right:556px;top:156.03px;font-size:11.3px;color:#000;font-weight:normal;text-align:right;">Freq Deviation:</div>
<div class="t" style="right:556px;top:173.03px;font-size:11.3px;color:#000;font-weight:normal;text-align:right;">Symbol Rate Error:</div>
<div class="t" style="right:556px;top:191.73px;font-size:11.3px;color:#000;font-weight:normal;text-align:right;">Symbol Rate:</div>
<div style="position:absolute;left:285px;top:208px;width:266px;height:93px;background:#ababab;"></div>
<div style="position:absolute;left:285px;top:208px;width:266px;height:1.5px;background:#1a1a1a;"></div>
<div style="position:absolute;left:285px;top:299.5px;width:266px;height:1.5px;background:#1a1a1a;"></div>
<div style="position:absolute;left:285px;top:208px;width:1.5px;height:93px;background:#333;"></div>
<div style="position:absolute;left:286.5px;top:209.5px;width:206.5px;height:75px;background:#fff;"></div>
<div style="position:absolute;left:286.5px;top:209.5px;width:206.5px;height:17px;background:linear-gradient(#fdfdfd,#f0f4f8);"></div>
<div style="position:absolute;left:286.5px;top:226px;width:206.5px;height:1px;background:#c8c8c8;"></div>
<div style="position:absolute;left:286.5px;top:245.5px;width:206.5px;height:1px;background:#c8c8c8;"></div>
<div style="position:absolute;left:286.5px;top:265px;width:206.5px;height:1px;background:#c8c8c8;"></div>
<div style="position:absolute;left:286.5px;top:284px;width:206.5px;height:1px;background:#c8c8c8;"></div>
<div style="position:absolute;left:345px;top:209.5px;width:1px;height:75px;background:#c8c8c8;"></div>
<div style="position:absolute;left:419px;top:209.5px;width:1px;height:75px;background:#c8c8c8;"></div>
<div style="position:absolute;left:492.5px;top:209.5px;width:1px;height:75px;background:#c8c8c8;"></div>
<div class="t" style="left:294.5px;top:213.83px;font-size:10.6px;color:#111;font-weight:normal;letter-spacing:-0.2px">Deviations</div>
<div class="t" style="left:352px;top:213.83px;font-size:10.6px;color:#000;font-weight:normal;">-1</div>
<div class="t" style="left:426px;top:213.83px;font-size:10.6px;color:#000;font-weight:normal;">+1</div>
<div class="t" style="left:290px;top:232.33px;font-size:10.6px;color:#111;font-weight:normal;letter-spacing:-0.3px">Max</div>
<div class="t" style="left:348px;top:232.33px;font-size:10.6px;color:#111;font-weight:normal;letter-spacing:-0.3px">-41.153 kHz</div>
<div class="t" style="left:422px;top:232.33px;font-size:10.6px;color:#111;font-weight:normal;letter-spacing:-0.3px">36.187 kHz</div>
<div class="t" style="left:290px;top:251.83px;font-size:10.6px;color:#111;font-weight:normal;letter-spacing:-0.3px">Min</div>
<div class="t" style="left:348px;top:251.83px;font-size:10.6px;color:#111;font-weight:normal;letter-spacing:-0.3px">-37.316 kHz</div>
<div class="t" style="left:422px;top:251.83px;font-size:10.6px;color:#111;font-weight:normal;letter-spacing:-0.3px">31.301 kHz</div>
<div class="t" style="left:290px;top:270.83px;font-size:10.6px;color:#111;font-weight:normal;letter-spacing:-0.3px">Avg</div>
<div class="t" style="left:348px;top:270.83px;font-size:10.6px;color:#111;font-weight:normal;letter-spacing:-0.3px">-39.292 kHz</div>
<div class="t" style="left:422px;top:270.83px;font-size:10.6px;color:#111;font-weight:normal;letter-spacing:-0.3px">33.382 kHz</div>
<div style="position:absolute;left:285px;top:348.5px;width:266px;height:14.5px;background:#f0f0f0;"></div>
<div style="position:absolute;left:300px;top:349.5px;width:180px;height:12.5px;background:#cdcdcd;"></div>
<svg width="6" height="9" viewBox="0 0 6 9" style="left:288px;top:351.25px;"><path d="M5 1 L1.5 4.5 L5 8" fill="none" stroke="#333" stroke-width="1.5"/></svg>
<svg width="6" height="9" viewBox="0 0 6 9" style="left:541px;top:351.25px;"><path d="M1 1 L4.5 4.5 L1 8" fill="none" stroke="#333" stroke-width="1.5"/></svg>
<div class="t" style="left:595.7px;top:106.03px;font-size:11.3px;color:#000;font-weight:normal;">Freq Error: -2.989 kHz, Auto</div>
<svg width="8" height="8" viewBox="0 0 8 8" style="left:561.4px;top:132.4px;"><ellipse cx="4.3" cy="3.4" rx="3.2" ry="3" fill="#b4b8c4"/><ellipse cx="4.8" cy="2.6" rx="1.6" ry="1.3" fill="#e8eaf0"/><circle cx="3" cy="2.4" r="1.4" fill="#1c9a22"/><circle cx="4.4" cy="3.2" r="0.8" fill="#e4e040"/><rect x="0" y="4.1" width="8" height="1.3" fill="#1a1a34"/><rect x="0" y="4.1" width="1.2" height="1.3" fill="#a07030"/><path d="M1.6 5.4 H6.8 L6.2 7.4 H2.2 Z" fill="#6464c8"/></svg>
<div class="t" style="left:580.2px;top:130.03px;font-size:11.3px;color:#000;font-weight:normal;">60.0 kHz</div>
<div class="t" style="left:571.6px;top:215.23px;font-size:11.3px;color:#000;font-weight:normal;">Position:</div>
<svg width="8" height="8" viewBox="0 0 8 8" style="left:561.4px;top:225.2px;"><ellipse cx="4.3" cy="3.4" rx="3.2" ry="3" fill="#b4b8c4"/><ellipse cx="4.8" cy="2.6" rx="1.6" ry="1.3" fill="#e8eaf0"/><circle cx="3" cy="2.4" r="1.4" fill="#1c9a22"/><circle cx="4.4" cy="3.2" r="0.8" fill="#e4e040"/><rect x="0" y="4.1" width="8" height="1.3" fill="#1a1a34"/><rect x="0" y="4.1" width="1.2" height="1.3" fill="#a07030"/><path d="M1.6 5.4 H6.8 L6.2 7.4 H2.2 Z" fill="#6464c8"/></svg>
<div class="t" style="left:575.3px;top:229.93px;font-size:11.3px;color:#000;font-weight:normal;">0.000 Hz</div>
<div class="t" style="left:562.4px;top:305.83px;font-size:11.3px;color:#000;font-weight:normal;">-60.0 kHz</div>
<div style="position:absolute;left:562.5px;top:327px;width:66.0px;height:19px;box-sizing:border-box;border:1px solid #3c8ad2;border-radius:3px;background:linear-gradient(#f6f6f6,#ececec 50%,#dcdcdc);"></div>
<div class="t" style="left:569.5px;top:332.73px;font-size:11.3px;color:#111;font-weight:normal;">Autoscale</div>
<svg width="10" height="7" viewBox="0 0 10 7" style="left:647px;top:321px;"><path d="M0 3 L3 0.5 V5.5 Z" fill="#a01010"/><path d="M4 1 H9 M6.5 1 V7" stroke="#a01010" stroke-width="1.2"/></svg>
<svg width="8" height="8" viewBox="0 0 8 8" style="left:650px;top:333.8px;"><ellipse cx="4.3" cy="3.4" rx="3.2" ry="3" fill="#b4b8c4"/><ellipse cx="4.8" cy="2.6" rx="1.6" ry="1.3" fill="#e8eaf0"/><circle cx="3" cy="2.4" r="1.4" fill="#1c9a22"/><circle cx="4.4" cy="3.2" r="0.8" fill="#e4e040"/><rect x="0" y="4.1" width="8" height="1.3" fill="#1a1a34"/><rect x="0" y="4.1" width="1.2" height="1.3" fill="#a07030"/><path d="M1.6 5.4 H6.8 L6.2 7.4 H2.2 Z" fill="#6464c8"/></svg>
<div class="t" style="left:665.4px;top:332.83px;font-size:11.3px;color:#000;font-weight:normal;">Po:</div>
<div style="position:absolute;left:681px;top:330px;width:4px;height:14px;background:#fdfdfd;"></div>
<svg width="8" height="8" viewBox="0 0 8 8" style="left:682.3px;top:333.8px;"><ellipse cx="4.3" cy="3.4" rx="3.2" ry="3" fill="#b4b8c4"/><ellipse cx="4.8" cy="2.6" rx="1.6" ry="1.3" fill="#e8eaf0"/><circle cx="3" cy="2.4" r="1.4" fill="#1c9a22"/><circle cx="4.4" cy="3.2" r="0.8" fill="#e4e040"/><rect x="0" y="4.1" width="8" height="1.3" fill="#1a1a34"/><rect x="0" y="4.1" width="1.2" height="1.3" fill="#a07030"/><path d="M1.6 5.4 H6.8 L6.2 7.4 H2.2 Z" fill="#6464c8"/></svg>
<div class="t" style="left:697.5px;top:332.83px;font-size:11.3px;color:#000;font-weight:normal;">Scale:</div>
<div style="position:absolute;left:735px;top:328.5px;width:82px;height:18.0px;box-sizing:border-box;border:1px solid #ababab;background:#fff;"></div>
<div style="position:absolute;left:739px;top:331.5px;width:53.5px;height:12px;background:#3399ff;"></div>
<div class="t" style="left:739.5px;top:333.03px;font-size:11.3px;color:#fff;font-weight:normal;">50 Symbol</div>
<div style="position:absolute;left:792px;top:331px;width:1px;height:13px;background:#000;"></div>
<svg width="170" height="192" viewBox="0 0 170 192" style="left:647.5px;top:128px;"><rect x="0" y="0" width="170" height="192" fill="#000"/><line x1="17.5" y1="0" x2="17.5" y2="192" stroke="#555555" stroke-width="1"/><line x1="34.5" y1="0" x2="34.5" y2="192" stroke="#555555" stroke-width="1"/><line x1="51.5" y1="0" x2="51.5" y2="192" stroke="#555555" stroke-width="1"/><line x1="68.5" y1="0" x2="68.5" y2="192" stroke="#555555" stroke-width="1"/><line x1="85.5" y1="0" x2="85.5" y2="192" stroke="#555555" stroke-width="1"/><line x1="102.5" y1="0" x2="102.5" y2="192" stroke="#555555" stroke-width="1"/><line x1="119.5" y1="0" x2="119.5" y2="192" stroke="#555555" stroke-width="1"/><line x1="136.5" y1="0" x2="136.5" y2="192" stroke="#555555" stroke-width="1"/><line x1="153.5" y1="0" x2="153.5" y2="192" stroke="#555555" stroke-width="1"/><line x1="0" y1="19.5" x2="170" y2="19.5" stroke="#555555" stroke-width="1"/><line x1="0" y1="38.5" x2="170" y2="38.5" stroke="#555555" stroke-width="1"/><line x1="0" y1="58.5" x2="170" y2="58.5" stroke="#555555" stroke-width="1"/><line x1="0" y1="77.5" x2="170" y2="77.5" stroke="#555555" stroke-width="1"/><line x1="0" y1="96.5" x2="170" y2="96.5" stroke="#555555" stroke-width="1"/><line x1="0" y1="115.5" x2="170" y2="115.5" stroke="#555555" stroke-width="1"/><line x1="0" y1="134.5" x2="170" y2="134.5" stroke="#555555" stroke-width="1"/><line x1="0" y1="154.5" x2="170" y2="154.5" stroke="#555555" stroke-width="1"/><line x1="0" y1="173.5" x2="170" y2="173.5" stroke="#555555" stroke-width="1"/><path d="M0.0 154.5 L3.9 154.2 L4.4 98.0 L5.1 96.0 L5.2 94.0 L5.0 40.0 L6.0 39.0 L7.4 37.9 L8.8 39.4 L10.2 39.6 L11.4 41.0 L11.6 94.0 L12.4 95.0 L12.5 99.0 L12.7 153.5 L13.9 153.2 L15.9 153.0 L17.9 158.0 L19.9 154.6 L20.8 154.0 L21.3 98.0 L22.0 96.0 L22.1 94.0 L21.9 40.0 L22.9 39.6 L24.3 41.1 L25.7 38.9 L27.1 40.3 L28.3 41.0 L28.5 94.0 L29.3 95.0 L29.4 99.0 L29.6 153.5 L30.8 155.3 L32.8 153.5 L34.8 151.7 L36.8 157.1 L37.7 155.6 L38.2 98.0 L38.9 96.0 L39.0 94.0 L38.8 40.0 L39.8 41.5 L41.2 38.1 L42.6 40.7 L44.0 38.4 L45.2 41.0 L45.4 94.0 L46.2 95.0 L46.3 99.0 L46.5 153.5 L47.7 152.4 L49.7 152.9 L51.7 157.8 L53.7 154.3 L54.6 154.7 L55.1 98.0 L55.8 96.0 L55.9 94.0 L55.7 40.0 L56.7 37.8 L58.1 39.3 L59.5 39.3 L60.9 41.4 L62.1 41.0 L62.3 94.0 L63.1 95.0 L63.2 99.0 L63.4 153.5 L64.6 157.9 L66.6 155.9 L68.6 152.6 L70.6 157.1 L71.5 155.6 L72.0 98.0 L72.7 96.0 L72.8 94.0 L72.6 40.0 L73.6 36.9 L75.0 40.9 L76.4 39.2 L77.8 37.4 L79.0 41.0 L79.2 94.0 L80.0 95.0 L80.1 99.0 L80.3 153.5 L81.5 152.1 L83.5 156.7 L85.5 154.2 L87.5 152.5 L88.4 153.6 L88.9 98.0 L89.6 96.0 L89.7 94.0 L89.5 40.0 L90.5 39.5 L91.9 35.8 L93.3 40.2 L94.7 37.7 L95.9 41.0 L96.1 94.0 L96.9 95.0 L97.0 99.0 L97.2 153.5 L98.4 158.0 L100.4 153.5 L102.4 152.0 L104.4 155.4 L105.3 155.3 L105.8 98.0 L106.5 96.0 L106.6 94.0 L106.4 40.0 L107.4 36.5 L108.8 35.8 L110.2 41.1 L111.6 37.5 L112.8 41.0 L113.0 94.0 L113.8 95.0 L113.9 99.0 L114.1 153.5 L115.3 154.5 L117.3 154.9 L119.3 155.7 L121.3 155.4 L122.2 155.0 L122.7 98.0 L123.4 96.0 L123.5 94.0 L123.3 40.0 L124.3 38.3 L125.7 40.2 L127.1 37.0 L128.5 37.5 L129.7 41.0 L129.9 94.0 L130.7 95.0 L130.8 99.0 L131.0 153.5 L132.2 151.6 L134.2 154.2 L136.2 155.3 L138.2 151.6 L139.1 155.4 L139.6 98.0 L140.3 96.0 L140.4 94.0 L140.2 40.0 L141.2 38.5 L142.6 39.9 L144.0 37.8 L145.4 40.1 L146.6 41.0 L146.8 94.0 L147.6 95.0 L147.7 99.0 L147.9 153.5 L149.1 155.9 L151.1 157.8 L153.1 153.1 L155.1 154.5 L156.0 154.4 L156.5 98.0 L157.2 96.0 L157.3 94.0 L157.1 40.0 L158.1 37.9 L159.5 39.4 L160.9 37.5 L162.3 38.0 L163.5 41.0 L163.7 94.0 L164.5 95.0 L164.6 99.0 L164.8 153.5 L166.0 156.3 L168.0 153.5 L170.0 152.9" fill="none" stroke="#e8e020" stroke-width="1.15"/><rect x="-1.5" y="-1" width="1.5" height="193" fill="#d0d0d0"/><rect x="3.8" y="36.6" width="2.6" height="2.6" fill="#ff2a7a"/><rect x="6.5" y="36.4" width="2.6" height="2.6" fill="#ff2a7a"/><rect x="9.5" y="39.6" width="2.6" height="2.6" fill="#ff2a7a"/><rect x="11.4" y="155.5" width="2.6" height="2.6" fill="#ff2a7a"/><rect x="14.2" y="153.7" width="2.6" height="2.6" fill="#ff2a7a"/><rect x="17.7" y="154.5" width="2.6" height="2.6" fill="#ff2a7a"/><rect x="20.7" y="39.0" width="2.6" height="2.6" fill="#ff2a7a"/><rect x="23.4" y="36.6" width="2.6" height="2.6" fill="#ff2a7a"/><rect x="26.4" y="39.3" width="2.6" height="2.6" fill="#ff2a7a"/><rect x="28.3" y="153.7" width="2.6" height="2.6" fill="#ff2a7a"/><rect x="31.1" y="154.9" width="2.6" height="2.6" fill="#ff2a7a"/><rect x="34.6" y="155.7" width="2.6" height="2.6" fill="#ff2a7a"/><rect x="37.6" y="40.0" width="2.6" height="2.6" fill="#ff2a7a"/><rect x="40.3" y="39.8" width="2.6" height="2.6" fill="#ff2a7a"/><rect x="43.3" y="36.7" width="2.6" height="2.6" fill="#ff2a7a"/><rect x="45.2" y="154.4" width="2.6" height="2.6" fill="#ff2a7a"/><rect x="48.0" y="152.8" width="2.6" height="2.6" fill="#ff2a7a"/><rect x="51.5" y="153.8" width="2.6" height="2.6" fill="#ff2a7a"/><rect x="54.5" y="39.0" width="2.6" height="2.6" fill="#ff2a7a"/><rect x="57.2" y="40.0" width="2.6" height="2.6" fill="#ff2a7a"/><rect x="60.2" y="39.7" width="2.6" height="2.6" fill="#ff2a7a"/><rect x="62.1" y="156.1" width="2.6" height="2.6" fill="#ff2a7a"/><rect x="64.9" y="155.8" width="2.6" height="2.6" fill="#ff2a7a"/><rect x="68.4" y="154.1" width="2.6" height="2.6" fill="#ff2a7a"/><rect x="71.4" y="36.6" width="2.6" height="2.6" fill="#ff2a7a"/><rect x="74.1" y="39.7" width="2.6" height="2.6" fill="#ff2a7a"/><rect x="77.1" y="40.3" width="2.6" height="2.6" fill="#ff2a7a"/><rect x="79.0" y="152.8" width="2.6" height="2.6" fill="#ff2a7a"/><rect x="81.8" y="155.1" width="2.6" height="2.6" fill="#ff2a7a"/><rect x="85.3" y="155.7" width="2.6" height="2.6" fill="#ff2a7a"/><rect x="88.3" y="39.8" width="2.6" height="2.6" fill="#ff2a7a"/><rect x="91.0" y="40.2" width="2.6" height="2.6" fill="#ff2a7a"/><rect x="94.0" y="38.3" width="2.6" height="2.6" fill="#ff2a7a"/><rect x="95.9" y="151.5" width="2.6" height="2.6" fill="#ff2a7a"/><rect x="98.7" y="152.3" width="2.6" height="2.6" fill="#ff2a7a"/><rect x="102.2" y="153.3" width="2.6" height="2.6" fill="#ff2a7a"/><rect x="105.2" y="40.1" width="2.6" height="2.6" fill="#ff2a7a"/><rect x="107.9" y="39.9" width="2.6" height="2.6" fill="#ff2a7a"/><rect x="110.9" y="37.8" width="2.6" height="2.6" fill="#ff2a7a"/><rect x="112.8" y="154.1" width="2.6" height="2.6" fill="#ff2a7a"/><rect x="115.6" y="154.4" width="2.6" height="2.6" fill="#ff2a7a"/><rect x="119.1" y="156.0" width="2.6" height="2.6" fill="#ff2a7a"/><rect x="122.1" y="40.2" width="2.6" height="2.6" fill="#ff2a7a"/><rect x="124.8" y="38.4" width="2.6" height="2.6" fill="#ff2a7a"/><rect x="127.8" y="38.5" width="2.6" height="2.6" fill="#ff2a7a"/><rect x="129.7" y="154.4" width="2.6" height="2.6" fill="#ff2a7a"/><rect x="132.5" y="154.5" width="2.6" height="2.6" fill="#ff2a7a"/><rect x="136.0" y="151.6" width="2.6" height="2.6" fill="#ff2a7a"/><rect x="139.0" y="39.3" width="2.6" height="2.6" fill="#ff2a7a"/><rect x="141.7" y="36.4" width="2.6" height="2.6" fill="#ff2a7a"/><rect x="144.7" y="36.5" width="2.6" height="2.6" fill="#ff2a7a"/><rect x="146.6" y="154.3" width="2.6" height="2.6" fill="#ff2a7a"/><rect x="149.4" y="152.9" width="2.6" height="2.6" fill="#ff2a7a"/><rect x="152.9" y="153.1" width="2.6" height="2.6" fill="#ff2a7a"/><rect x="155.9" y="39.4" width="2.6" height="2.6" fill="#ff2a7a"/><rect x="158.6" y="36.4" width="2.6" height="2.6" fill="#ff2a7a"/><rect x="161.6" y="38.6" width="2.6" height="2.6" fill="#ff2a7a"/><rect x="163.5" y="152.5" width="2.6" height="2.6" fill="#ff2a7a"/><rect x="166.3" y="152.2" width="2.6" height="2.6" fill="#ff2a7a"/></svg>
<svg width="10" height="7" viewBox="0 0 10 7" style="left:871px;top:113px;"><path d="M0.5 0.5 H9.5 L5 6 Z" fill="#7a7a9a"/></svg>
<div class="t" style="left:883.2px;top:112.73px;font-size:11.3px;color:#000;font-weight:normal;">Trace1</div>
<div style="position:absolute;left:947.5px;top:110px;width:12.5px;height:12.5px;box-sizing:border-box;border:1px solid #5a8cc4;border-radius:2px;background:linear-gradient(#f4f4f4,#ffffff);"><svg width="12.5" height="12.5" style="left:-1px;top:-1px"><path d="M3 6.2 L5.2 8.6 L9.3 3.6" fill="none" stroke="#2a6cb8" stroke-width="1.5"/></svg></div>
<div class="t" style="left:963.7px;top:111.93px;font-size:11.3px;color:#000;font-weight:normal;">Show</div>
<div class="t" style="left:1005px;top:112.73px;font-size:11.3px;color:#000;font-weight:normal;">Vectors</div>
<svg width="176" height="176" viewBox="0 0 176 176" style="left:910.5px;top:128.5px;"><rect x="0" y="0" width="176" height="176" fill="#000" stroke="#c8c8c8" stroke-width="1"/><line x1="30.5" y1="0" x2="30.5" y2="176" stroke="#8a8a8a"/><line x1="147" y1="0" x2="147" y2="176" stroke="#8a8a8a"/><line x1="24" y1="88" x2="155" y2="88" stroke="#d8c818" stroke-width="1.2"/><rect x="24" y="86.5" width="11" height="3" fill="#ff1a8c"/><rect x="37" y="86.5" width="3" height="3" fill="#ff1a8c"/><rect x="142" y="86.5" width="11" height="3" fill="#ff1a8c"/></svg>
<div class="t" style="left:942.2px;top:324.63px;font-size:11.3px;color:#000;font-weight:normal;">Freq Error: -2.989 kHz, Auto</div>
<div style="position:absolute;left:833px;top:342.5px;width:264px;height:18.5px;box-sizing:border-box;border:1px solid #d4d4d4;border-radius:2px;background:#fff;"></div>
<div class="t" style="left:836.1px;top:346.38px;font-size:10.3px;color:#000;font-weight:normal;">Avg Dev</div>
<div class="t" style="left:897.8px;top:346.38px;font-size:10.3px;color:#000;font-weight:normal;">-1:</div>
<div class="t" style="left:926.3px;top:346.38px;font-size:10.3px;color:#000;font-weight:normal;letter-spacing:-0.2px">-39.292 kHz</div>
<div class="t" style="left:999.5px;top:346.38px;font-size:10.3px;color:#000;font-weight:normal;">+1:</div>
<div class="t" style="left:1028px;top:346.38px;font-size:10.3px;color:#000;font-weight:normal;letter-spacing:-0.2px">33.382 kHz</div>
<div style="position:absolute;left:234.5px;top:392px;width:38px;height:18.5px;box-sizing:border-box;border:1px solid #3c8ad2;border-radius:3px;background:linear-gradient(#f8f8f8,#e4e4e4);overflow:hidden;"><div class="t" style="left:3.5px;top:3px;font-size:11.3px;color:#111">CNorm</div></div>
<svg width="8" height="8" viewBox="0 0 8 8" style="left:11.9px;top:419.2px;"><ellipse cx="4.3" cy="3.4" rx="3.2" ry="3" fill="#b4b8c4"/><ellipse cx="4.8" cy="2.6" rx="1.6" ry="1.3" fill="#e8eaf0"/><circle cx="3" cy="2.4" r="1.4" fill="#1c9a22"/><circle cx="4.4" cy="3.2" r="0.8" fill="#e4e040"/><rect x="0" y="4.1" width="8" height="1.3" fill="#1a1a34"/><rect x="0" y="4.1" width="1.2" height="1.3" fill="#a07030"/><path d="M1.6 5.4 H6.8 L6.2 7.4 H2.2 Z" fill="#6464c8"/></svg>
<div class="t" style="left:27.3px;top:417.63px;font-size:11.3px;color:#000;font-weight:normal;">-30.00</div>
<div style="position:absolute;left:34px;top:434px;width:64px;height:17.5px;box-sizing:border-box;border:1px solid #b4b4b4;border-right:none;background:#fff;"></div>
<div style="position:absolute;left:85px;top:436px;width:12px;height:13.5px;box-sizing:border-box;border:1px solid #3f8ad2;border-radius:2px;background:linear-gradient(#eaf4fc,#cfe6f8);"><svg width="10" height="10" style="left:0.5px;top:2px"><path d="M2 3.5 L5 6.5 L8 3.5" fill="none" stroke="#2a5a90" stroke-width="1.4"/></svg></div>
<div class="t" style="left:37.9px;top:438.53px;font-size:11.3px;color:#111;font-weight:normal;">dBm</div>
<div class="t" style="left:22.7px;top:479.63px;font-size:11.3px;color:#000;font-weight:normal;">dB/div:</div>
<svg width="8" height="8" viewBox="0 0 8 8" style="left:11.9px;top:490.1px;"><ellipse cx="4.3" cy="3.4" rx="3.2" ry="3" fill="#b4b8c4"/><ellipse cx="4.8" cy="2.6" rx="1.6" ry="1.3" fill="#e8eaf0"/><circle cx="3" cy="2.4" r="1.4" fill="#1c9a22"/><circle cx="4.4" cy="3.2" r="0.8" fill="#e4e040"/><rect x="0" y="4.1" width="8" height="1.3" fill="#1a1a34"/><rect x="0" y="4.1" width="1.2" height="1.3" fill="#a07030"/><path d="M1.6 5.4 H6.8 L6.2 7.4 H2.2 Z" fill="#6464c8"/></svg>
<div class="t" style="left:26.4px;top:494.83px;font-size:11.3px;color:#000;font-weight:normal;">10.0 dB</div>
<div class="t" style="left:20.7px;top:541.33px;font-size:11.3px;color:#000;font-weight:normal;">-130.00 dBm</div>
<div style="position:absolute;left:17px;top:556.5px;width:58px;height:20.5px;box-sizing:border-box;border:1px solid #3c8ad2;border-radius:3px;background:linear-gradient(#f6f6f6,#ececec 50%,#dcdcdc);"></div>
<div class="t" style="left:22.5px;top:563.23px;font-size:11.3px;color:#111;font-weight:normal;">Autoscale</div>
<svg width="8" height="8" viewBox="0 0 8 8" style="left:93px;top:564.9px;"><ellipse cx="4.3" cy="3.4" rx="3.2" ry="3" fill="#b4b8c4"/><ellipse cx="4.8" cy="2.6" rx="1.6" ry="1.3" fill="#e8eaf0"/><circle cx="3" cy="2.4" r="1.4" fill="#1c9a22"/><circle cx="4.4" cy="3.2" r="0.8" fill="#e4e040"/><rect x="0" y="4.1" width="8" height="1.3" fill="#1a1a34"/><rect x="0" y="4.1" width="1.2" height="1.3" fill="#a07030"/><path d="M1.6 5.4 H6.8 L6.2 7.4 H2.2 Z" fill="#6464c8"/></svg>
<div class="t" style="left:108.4px;top:563.33px;font-size:11.3px;color:#000;font-weight:normal;">Pos</div>
<div class="t" style="left:132.5px;top:563.33px;font-size:11.3px;color:#000;font-weight:normal;">4</div>
<div style="position:absolute;left:137px;top:562px;width:4px;height:13px;background:#fdfdfd;"></div>
<svg width="8" height="8" viewBox="0 0 8 8" style="left:140px;top:564.9px;"><ellipse cx="4.3" cy="3.4" rx="3.2" ry="3" fill="#b4b8c4"/><ellipse cx="4.8" cy="2.6" rx="1.6" ry="1.3" fill="#e8eaf0"/><circle cx="3" cy="2.4" r="1.4" fill="#1c9a22"/><circle cx="4.4" cy="3.2" r="0.8" fill="#e4e040"/><rect x="0" y="4.1" width="8" height="1.3" fill="#1a1a34"/><rect x="0" y="4.1" width="1.2" height="1.3" fill="#a07030"/><path d="M1.6 5.4 H6.8 L6.2 7.4 H2.2 Z" fill="#6464c8"/></svg>
<div class="t" style="left:154.7px;top:563.33px;font-size:11.3px;color:#000;font-weight:normal;">Scale</div>
<div class="t" style="left:190.9px;top:563.33px;font-size:11.3px;color:#000;font-weight:normal;">315.0 kHz</div>
<div style="position:absolute;left:9.5px;top:581px;width:268.0px;height:5px;box-sizing:border-box;border:1px solid #8a8a8a;border-radius:1px;background:#f4f4f4;"></div>
<svg width="12" height="3" viewBox="0 0 12 3" style="left:137.5px;top:582px;"><circle cx="2" cy="1.5" r="1" fill="#9a9a9a"/><circle cx="6" cy="1.5" r="1" fill="#9a9a9a"/><circle cx="10" cy="1.5" r="1" fill="#9a9a9a"/></svg>
<div style="position:absolute;left:11px;top:594px;width:259.5px;height:49.5px;box-sizing:border-box;border:1px solid #a9a9a9;background:#fff;"></div>
<div style="position:absolute;left:40.4px;top:595px;width:1px;height:47.5px;background:#e4ecf4;"></div>
<div style="position:absolute;left:115px;top:595px;width:1px;height:47.5px;background:#e4ecf4;"></div>
<div style="position:absolute;left:183.3px;top:595px;width:1px;height:47.5px;background:#e4ecf4;"></div>
<div style="position:absolute;left:251.6px;top:595px;width:1px;height:47.5px;background:#e4ecf4;"></div>
<div style="position:absolute;left:12px;top:617.5px;width:257.5px;height:1px;background:#e8eef4;"></div>
<div style="position:absolute;left:12px;top:633.5px;width:257.5px;height:1px;background:#e8eef4;"></div>
<div class="t" style="left:18.2px;top:601.83px;font-size:11.3px;color:#000;font-weight:normal;">Ch</div>
<div class="t" style="left:46px;top:601.83px;font-size:11.3px;color:#000;font-weight:normal;">Offset</div>
<div class="t" style="left:120px;top:601.83px;font-size:11.3px;color:#000;font-weight:normal;">Lower</div>
<div class="t" style="left:188.4px;top:601.83px;font-size:11.3px;color:#000;font-weight:normal;">Upper</div>
<div class="t" style="left:18.2px;top:621.53px;font-size:11.3px;color:#000;font-weight:normal;">A1</div>
<div class="t" style="left:46px;top:621.53px;font-size:11.3px;color:#000;font-weight:normal;">50.000 kHz</div>
<div class="t" style="left:120px;top:621.53px;font-size:11.3px;color:#000;font-weight:normal;">3.01 dB</div>
<div class="t" style="left:188.4px;top:621.53px;font-size:11.3px;color:#000;font-weight:normal;">2.35 dB</div>
<svg width="171" height="144" viewBox="0 0 171 144" style="left:98.8px;top:413.8px;"><rect x="0" y="0" width="171" height="144" fill="#3a3a3a"/><rect x="45" y="0" width="81" height="144" fill="#000"/><line x1="17.5" y1="0" x2="17.5" y2="144" stroke="#5e5e5e"/><line x1="34.5" y1="0" x2="34.5" y2="144" stroke="#5e5e5e"/><line x1="51.5" y1="0" x2="51.5" y2="144" stroke="#5e5e5e"/><line x1="68.5" y1="0" x2="68.5" y2="144" stroke="#5e5e5e"/><line x1="86.5" y1="0" x2="86.5" y2="144" stroke="#5e5e5e"/><line x1="103.5" y1="0" x2="103.5" y2="144" stroke="#5e5e5e"/><line x1="120.5" y1="0" x2="120.5" y2="144" stroke="#5e5e5e"/><line x1="137.5" y1="0" x2="137.5" y2="144" stroke="#5e5e5e"/><line x1="154.5" y1="0" x2="154.5" y2="144" stroke="#5e5e5e"/><line x1="71.5" y1="0" x2="71.5" y2="144" stroke="#4a4a4a"/><line x1="0" y1="14.5" x2="171" y2="14.5" stroke="#5e5e5e"/><line x1="0" y1="29.5" x2="171" y2="29.5" stroke="#5e5e5e"/><line x1="0" y1="43.5" x2="171" y2="43.5" stroke="#5e5e5e"/><line x1="0" y1="58.5" x2="171" y2="58.5" stroke="#5e5e5e"/><line x1="0" y1="72.5" x2="171" y2="72.5" stroke="#5e5e5e"/><line x1="0" y1="86.5" x2="171" y2="86.5" stroke="#5e5e5e"/><line x1="0" y1="101.5" x2="171" y2="101.5" stroke="#5e5e5e"/><line x1="0" y1="115.5" x2="171" y2="115.5" stroke="#5e5e5e"/><line x1="0" y1="130.5" x2="171" y2="130.5" stroke="#5e5e5e"/><path d="M0.00 77.00 C1.87 76.90 6.83 77.08 11.20 76.40 C15.57 75.72 22.53 74.02 26.20 72.90 C29.87 71.78 30.88 71.03 33.20 69.70 C35.52 68.37 38.12 67.52 40.10 64.90 C42.08 62.28 43.27 57.97 45.10 54.00 C46.93 50.03 49.42 44.23 51.10 41.10 C52.78 37.97 53.72 36.70 55.20 35.20 C56.68 33.70 58.58 32.73 60.00 32.10 C61.42 31.47 62.38 31.48 63.70 31.40 C65.02 31.32 66.57 31.10 67.90 31.60 C69.23 32.10 70.37 33.15 71.70 34.40 C73.03 35.65 74.52 37.38 75.90 39.10 C77.28 40.82 78.67 42.88 80.00 44.70 C81.33 46.52 82.60 50.00 83.90 50.00 C85.20 50.00 86.48 46.52 87.80 44.70 C89.12 42.88 90.40 40.85 91.80 39.10 C93.20 37.35 94.70 35.45 96.20 34.20 C97.70 32.95 99.55 32.08 100.80 31.60 C102.05 31.12 102.72 31.30 103.70 31.30 C104.68 31.30 105.53 31.03 106.70 31.60 C107.87 32.17 109.20 33.28 110.70 34.70 C112.20 36.12 113.88 37.38 115.70 40.10 C117.52 42.82 119.95 47.68 121.60 51.00 C123.25 54.32 123.93 57.02 125.60 60.00 C127.27 62.98 129.95 67.08 131.60 68.90 C133.25 70.72 133.07 69.98 135.50 70.90 C137.93 71.82 142.25 73.55 146.20 74.40 C150.15 75.25 155.07 75.60 159.20 76.00 C163.33 76.40 169.03 76.67 171.00 76.80" fill="none" stroke="#a8a448" stroke-width="1"/><clipPath id="cpc"><rect x="45" y="0" width="81" height="144"/></clipPath><path d="M0.00 77.00 C1.87 76.90 6.83 77.08 11.20 76.40 C15.57 75.72 22.53 74.02 26.20 72.90 C29.87 71.78 30.88 71.03 33.20 69.70 C35.52 68.37 38.12 67.52 40.10 64.90 C42.08 62.28 43.27 57.97 45.10 54.00 C46.93 50.03 49.42 44.23 51.10 41.10 C52.78 37.97 53.72 36.70 55.20 35.20 C56.68 33.70 58.58 32.73 60.00 32.10 C61.42 31.47 62.38 31.48 63.70 31.40 C65.02 31.32 66.57 31.10 67.90 31.60 C69.23 32.10 70.37 33.15 71.70 34.40 C73.03 35.65 74.52 37.38 75.90 39.10 C77.28 40.82 78.67 42.88 80.00 44.70 C81.33 46.52 82.60 50.00 83.90 50.00 C85.20 50.00 86.48 46.52 87.80 44.70 C89.12 42.88 90.40 40.85 91.80 39.10 C93.20 37.35 94.70 35.45 96.20 34.20 C97.70 32.95 99.55 32.08 100.80 31.60 C102.05 31.12 102.72 31.30 103.70 31.30 C104.68 31.30 105.53 31.03 106.70 31.60 C107.87 32.17 109.20 33.28 110.70 34.70 C112.20 36.12 113.88 37.38 115.70 40.10 C117.52 42.82 119.95 47.68 121.60 51.00 C123.25 54.32 123.93 57.02 125.60 60.00 C127.27 62.98 129.95 67.08 131.60 68.90 C133.25 70.72 133.07 69.98 135.50 70.90 C137.93 71.82 142.25 73.55 146.20 74.40 C150.15 75.25 155.07 75.60 159.20 76.00 C163.33 76.40 169.03 76.67 171.00 76.80" fill="none" stroke="#ece428" stroke-width="1.6" clip-path="url(#cpc)"/></svg>
<div class="t" style="left:139px;top:463.23px;font-size:11.3px;color:#dadada;font-weight:normal;">LA1M</div>
<div class="t" style="left:193.4px;top:463.23px;font-size:11.3px;color:#dadada;font-weight:normal;">UA1</div>
<div class="t" style="left:139px;top:474.23px;font-size:11.3px;color:#dadada;font-weight:normal;">3.01 dB</div>
<div class="t" style="left:155.5px;top:474.23px;font-size:11.3px;color:rgba(222,222,222,0.85);font-weight:normal;">-65.64 dB</div>
<div class="t" style="left:189.6px;top:474.23px;font-size:11.3px;color:rgba(222,222,222,0.85);font-weight:normal;">2.35 dB</div>
<div class="t" style="left:322.4px;top:394.43px;font-size:11.3px;color:#000;font-weight:normal;">Freq Error: -2.989 kHz, Auto</div>
<svg width="8" height="8" viewBox="0 0 8 8" style="left:288.3px;top:417.4px;"><ellipse cx="4.3" cy="3.4" rx="3.2" ry="3" fill="#b4b8c4"/><ellipse cx="4.8" cy="2.6" rx="1.6" ry="1.3" fill="#e8eaf0"/><circle cx="3" cy="2.4" r="1.4" fill="#1c9a22"/><circle cx="4.4" cy="3.2" r="0.8" fill="#e4e040"/><rect x="0" y="4.1" width="8" height="1.3" fill="#1a1a34"/><rect x="0" y="4.1" width="1.2" height="1.3" fill="#a07030"/><path d="M1.6 5.4 H6.8 L6.2 7.4 H2.2 Z" fill="#6464c8"/></svg>
<div class="t" style="left:301px;top:416.23px;font-size:11.3px;color:#000;font-weight:normal;">50.0 kHz</div>
<div style="position:absolute;left:299px;top:414px;width:5px;height:13px;background:#fdfdfd;"></div>
<div class="t" style="left:298.5px;top:499.23px;font-size:11.3px;color:#000;font-weight:normal;">Position:</div>
<svg width="8" height="8" viewBox="0 0 8 8" style="left:288.3px;top:509.5px;"><ellipse cx="4.3" cy="3.4" rx="3.2" ry="3" fill="#b4b8c4"/><ellipse cx="4.8" cy="2.6" rx="1.6" ry="1.3" fill="#e8eaf0"/><circle cx="3" cy="2.4" r="1.4" fill="#1c9a22"/><circle cx="4.4" cy="3.2" r="0.8" fill="#e4e040"/><rect x="0" y="4.1" width="8" height="1.3" fill="#1a1a34"/><rect x="0" y="4.1" width="1.2" height="1.3" fill="#a07030"/><path d="M1.6 5.4 H6.8 L6.2 7.4 H2.2 Z" fill="#6464c8"/></svg>
<div class="t" style="left:301.8px;top:513.63px;font-size:11.3px;color:#000;font-weight:normal;">0.000 Hz</div>
<div class="t" style="left:289px;top:589.73px;font-size:11.3px;color:#000;font-weight:normal;">-50.0 kHz</div>
<div style="position:absolute;left:289px;top:611px;width:66.5px;height:19.5px;box-sizing:border-box;border:1px solid #3c8ad2;border-radius:3px;background:linear-gradient(#f6f6f6,#ececec 50%,#dcdcdc);"></div>
<div class="t" style="left:295.5px;top:616.73px;font-size:11.3px;color:#111;font-weight:normal;">Autoscale</div>
<svg width="8" height="8" viewBox="0 0 8 8" style="left:376.7px;top:618.5px;"><ellipse cx="4.3" cy="3.4" rx="3.2" ry="3" fill="#b4b8c4"/><ellipse cx="4.8" cy="2.6" rx="1.6" ry="1.3" fill="#e8eaf0"/><circle cx="3" cy="2.4" r="1.4" fill="#1c9a22"/><circle cx="4.4" cy="3.2" r="0.8" fill="#e4e040"/><rect x="0" y="4.1" width="8" height="1.3" fill="#1a1a34"/><rect x="0" y="4.1" width="1.2" height="1.3" fill="#a07030"/><path d="M1.6 5.4 H6.8 L6.2 7.4 H2.2 Z" fill="#6464c8"/></svg>
<div class="t" style="left:391.8px;top:616.73px;font-size:11.3px;color:#000;font-weight:normal;">P</div>
<div style="position:absolute;left:399px;top:614px;width:3px;height:13px;background:#fdfdfd;"></div>
<svg width="8" height="8" viewBox="0 0 8 8" style="left:401.4px;top:618.5px;"><ellipse cx="4.3" cy="3.4" rx="3.2" ry="3" fill="#b4b8c4"/><ellipse cx="4.8" cy="2.6" rx="1.6" ry="1.3" fill="#e8eaf0"/><circle cx="3" cy="2.4" r="1.4" fill="#1c9a22"/><circle cx="4.4" cy="3.2" r="0.8" fill="#e4e040"/><rect x="0" y="4.1" width="8" height="1.3" fill="#1a1a34"/><rect x="0" y="4.1" width="1.2" height="1.3" fill="#a07030"/><path d="M1.6 5.4 H6.8 L6.2 7.4 H2.2 Z" fill="#6464c8"/></svg>
<div class="t" style="left:417px;top:616.73px;font-size:11.3px;color:#000;font-weight:normal;">Scale:</div>
<div class="t" style="left:458px;top:616.43px;font-size:11.3px;color:#000;font-weight:normal;"><i>4 Symbol</i></div>
<svg width="165" height="188" viewBox="0 0 165 188" style="left:376px;top:414.5px;"><rect x="0" y="0" width="165" height="188" fill="#000" stroke="#c8c8c8" stroke-width="1"/><line x1="41.5" y1="0" x2="41.5" y2="188" stroke="#5a5a5a"/><line x1="82.5" y1="0" x2="82.5" y2="188" stroke="#5a5a5a"/><line x1="124.5" y1="0" x2="124.5" y2="188" stroke="#5a5a5a"/><line x1="0" y1="19.5" x2="165" y2="19.5" stroke="#5a5a5a"/><line x1="0" y1="37.5" x2="165" y2="37.5" stroke="#5a5a5a"/><line x1="0" y1="56.5" x2="165" y2="56.5" stroke="#5a5a5a"/><line x1="0" y1="75.5" x2="165" y2="75.5" stroke="#5a5a5a"/><line x1="0" y1="94.5" x2="165" y2="94.5" stroke="#5a5a5a"/><line x1="0" y1="112.5" x2="165" y2="112.5" stroke="#5a5a5a"/><line x1="0" y1="131.5" x2="165" y2="131.5" stroke="#5a5a5a"/><line x1="0" y1="150.5" x2="165" y2="150.5" stroke="#5a5a5a"/><line x1="0" y1="168.5" x2="165" y2="168.5" stroke="#5a5a5a"/><path d="M0.0 26.7 L7.2 27.9 L14.3 28.5 L21.5 29.9 L28.7 27.9 L35.9 29.7 L43.0 20.8 L50.2 25.2 L57.4 29.9 L64.6 27.0 L71.7 29.5 L78.9 21.6 L86.1 25.2 L93.3 23.0 L100.4 25.9 L107.6 26.2 L114.8 20.6 L122.0 22.7 L129.1 23.3 L136.3 29.7 L143.5 28.2 L150.7 22.1 L157.8 28.5 L165.0 21.9" fill="none" stroke="#e8e424" stroke-width="1"/><path d="M0.0 162.2 L7.2 157.3 L14.3 156.0 L21.5 164.7 L28.7 158.1 L35.9 158.2 L43.0 165.8 L50.2 164.7 L57.4 158.9 L64.6 165.6 L71.7 161.4 L78.9 162.8 L86.1 158.0 L93.3 165.4 L100.4 162.9 L107.6 165.7 L114.8 164.9 L122.0 159.0 L129.1 159.6 L136.3 157.7 L143.5 157.5 L150.7 156.7 L157.8 159.0 L165.0 162.0" fill="none" stroke="#e8e424" stroke-width="1"/><path d="M0.0 20.5 L7.2 27.3 L14.3 23.9 L21.5 23.6 L28.7 28.7 L35.9 25.3 L43.0 23.7 L50.2 25.3 L57.4 27.5 L64.6 21.1 L71.7 30.3 L78.9 20.7 L86.1 28.0 L93.3 28.9 L100.4 20.7 L107.6 28.4 L114.8 24.2 L122.0 26.3 L129.1 20.6 L136.3 21.0 L143.5 22.3 L150.7 30.1 L157.8 22.5 L165.0 28.1" fill="none" stroke="#e8e424" stroke-width="1"/><path d="M0.0 165.3 L7.2 165.4 L14.3 159.4 L21.5 159.5 L28.7 161.2 L35.9 163.8 L43.0 157.1 L50.2 163.5 L57.4 164.0 L64.6 164.6 L71.7 156.4 L78.9 165.5 L86.1 156.9 L93.3 159.4 L100.4 162.1 L107.6 165.2 L114.8 159.4 L122.0 165.2 L129.1 161.5 L136.3 159.1 L143.5 159.2 L150.7 157.8 L157.8 156.8 L165.0 157.5" fill="none" stroke="#e8e424" stroke-width="1"/><path d="M0.0 27.4 L7.2 30.5 L14.3 22.1 L21.5 21.0 L28.7 30.4 L35.9 25.8 L43.0 24.6 L50.2 22.9 L57.4 26.4 L64.6 28.8 L71.7 25.1 L78.9 24.7 L86.1 21.1 L93.3 29.7 L100.4 20.8 L107.6 25.4 L114.8 28.9 L122.0 21.8 L129.1 27.8 L136.3 30.0 L143.5 26.8 L150.7 28.4 L157.8 21.6 L165.0 24.8" fill="none" stroke="#e8e424" stroke-width="1"/><path d="M0.0 157.5 L7.2 164.4 L14.3 158.9 L21.5 160.5 L28.7 166.0 L35.9 164.5 L43.0 165.8 L50.2 160.5 L57.4 160.9 L64.6 163.3 L71.7 160.8 L78.9 158.9 L86.1 160.0 L93.3 157.5 L100.4 159.8 L107.6 165.9 L114.8 165.6 L122.0 162.3 L129.1 161.0 L136.3 159.4 L143.5 156.9 L150.7 158.7 L157.8 163.8 L165.0 164.7" fill="none" stroke="#e8e424" stroke-width="1"/><path d="M0.0 24.1 L7.2 28.4 L14.3 28.2 L21.5 27.4 L28.7 27.1 L35.9 28.1 L43.0 24.1 L50.2 27.5 L57.4 23.3 L64.6 25.4 L71.7 28.2 L78.9 27.4 L86.1 23.4 L93.3 30.0 L100.4 27.0 L107.6 26.3 L114.8 20.6 L122.0 26.0 L129.1 23.0 L136.3 27.2 L143.5 25.1 L150.7 28.7 L157.8 27.0 L165.0 28.5" fill="none" stroke="#e8e424" stroke-width="1"/><path d="M0.0 159.5 L7.2 162.4 L14.3 163.4 L21.5 164.3 L28.7 159.5 L35.9 164.4 L43.0 164.7 L50.2 162.9 L57.4 165.8 L64.6 165.6 L71.7 161.2 L78.9 161.3 L86.1 157.7 L93.3 164.4 L100.4 165.4 L107.6 160.8 L114.8 162.9 L122.0 163.2 L129.1 163.3 L136.3 157.7 L143.5 163.8 L150.7 161.8 L157.8 162.7 L165.0 160.2" fill="none" stroke="#e8e424" stroke-width="1"/><path d="M0.0 26.7 L7.2 28.2 L14.3 26.9 L21.5 27.7 L28.7 20.8 L35.9 22.1 L43.0 24.9 L50.2 27.0 L57.4 22.7 L64.6 27.4 L71.7 26.8 L78.9 20.9 L86.1 25.2 L93.3 22.8 L100.4 21.0 L107.6 21.8 L114.8 23.7 L122.0 22.3 L129.1 22.4 L136.3 20.9 L143.5 25.2 L150.7 24.3 L157.8 26.6 L165.0 26.4" fill="none" stroke="#e8e424" stroke-width="1"/><path d="M0.0 158.4 L7.2 165.0 L14.3 156.0 L21.5 160.1 L28.7 158.8 L35.9 160.1 L43.0 157.2 L50.2 164.3 L57.4 159.7 L64.6 156.4 L71.7 162.1 L78.9 156.9 L86.1 161.5 L93.3 159.4 L100.4 161.8 L107.6 165.6 L114.8 164.2 L122.0 160.2 L129.1 164.1 L136.3 162.4 L143.5 159.7 L150.7 157.4 L157.8 162.0 L165.0 161.6" fill="none" stroke="#e8e424" stroke-width="1"/><path d="M0.0 30.1 L7.2 30.2 L14.3 26.6 L21.5 24.0 L28.7 29.4 L35.9 20.5 L43.0 21.6 L50.2 26.2 L57.4 26.7 L64.6 21.9 L71.7 26.8 L78.9 29.4 L86.1 24.3 L93.3 24.8 L100.4 22.8 L107.6 23.4 L114.8 30.2 L122.0 24.3 L129.1 30.1 L136.3 29.6 L143.5 26.5 L150.7 23.1 L157.8 30.3 L165.0 25.5" fill="none" stroke="#e8e424" stroke-width="1"/><path d="M0.0 160.2 L7.2 159.2 L14.3 165.8 L21.5 160.9 L28.7 158.9 L35.9 160.8 L43.0 157.2 L50.2 162.2 L57.4 160.4 L64.6 158.9 L71.7 163.8 L78.9 164.3 L86.1 156.1 L93.3 161.3 L100.4 158.7 L107.6 165.4 L114.8 163.8 L122.0 158.5 L129.1 158.7 L136.3 157.5 L143.5 165.9 L150.7 158.9 L157.8 162.1 L165.0 160.7" fill="none" stroke="#e8e424" stroke-width="1"/><path d="M0.0 26.9 L7.2 26.5 L14.3 27.9 L21.5 21.7 L28.7 28.1 L35.9 23.5 L43.0 25.8 L50.2 23.9 L57.4 23.5 L64.6 25.8 L71.7 25.1 L78.9 24.1 L86.1 28.0 L93.3 26.4 L100.4 20.9 L107.6 23.0 L114.8 25.1 L122.0 29.7 L129.1 29.4 L136.3 26.0 L143.5 20.6 L150.7 28.3 L157.8 24.8 L165.0 26.3" fill="none" stroke="#e8e424" stroke-width="1"/><path d="M0.0 163.1 L7.2 162.3 L14.3 160.8 L21.5 165.1 L28.7 159.9 L35.9 159.9 L43.0 164.5 L50.2 158.0 L57.4 159.0 L64.6 164.3 L71.7 156.7 L78.9 164.4 L86.1 162.9 L93.3 160.3 L100.4 158.9 L107.6 163.8 L114.8 165.1 L122.0 157.4 L129.1 160.8 L136.3 161.5 L143.5 161.0 L150.7 159.3 L157.8 157.5 L165.0 161.9" fill="none" stroke="#e8e424" stroke-width="1"/><line x1="10.4" y1="25.5" x2="20.4" y2="161" stroke="#e8e424" stroke-width="1.1"/><line x1="11.9" y1="25.5" x2="21.9" y2="161" stroke="#e8e424" stroke-width="1.1"/><line x1="41.3" y1="25.5" x2="32" y2="161" stroke="#e8e424" stroke-width="1.1"/><line x1="42.8" y1="25.5" x2="33.5" y2="161" stroke="#e8e424" stroke-width="1.1"/><line x1="50.4" y1="25.5" x2="61.9" y2="161" stroke="#e8e424" stroke-width="1.1"/><line x1="51.9" y1="25.5" x2="63.4" y2="161" stroke="#e8e424" stroke-width="1.1"/><line x1="81.9" y1="25.5" x2="71.9" y2="161" stroke="#e8e424" stroke-width="1.1"/><line x1="83.4" y1="25.5" x2="73.4" y2="161" stroke="#e8e424" stroke-width="1.1"/><line x1="93.3" y1="25.5" x2="103.3" y2="161" stroke="#e8e424" stroke-width="1.1"/><line x1="94.8" y1="25.5" x2="104.8" y2="161" stroke="#e8e424" stroke-width="1.1"/><line x1="123.3" y1="25.5" x2="113.3" y2="161" stroke="#e8e424" stroke-width="1.1"/><line x1="124.8" y1="25.5" x2="114.8" y2="161" stroke="#e8e424" stroke-width="1.1"/><line x1="133.3" y1="25.5" x2="144.7" y2="161" stroke="#e8e424" stroke-width="1.1"/><line x1="134.8" y1="25.5" x2="146.2" y2="161" stroke="#e8e424" stroke-width="1.1"/><line x1="163.3" y1="25.5" x2="153.3" y2="161" stroke="#e8e424" stroke-width="1.1"/><line x1="164.8" y1="25.5" x2="154.8" y2="161" stroke="#e8e424" stroke-width="1.1"/></svg>
<div style="position:absolute;left:572.5px;top:418.5px;width:241px;height:218px;box-sizing:border-box;border:1px solid #a0a0a0;background:#fff;"></div>
<div style="position:absolute;left:573.5px;top:419.5px;width:27px;height:196px;background:#f0f0f0;"></div>
<div style="position:absolute;left:600.2px;top:419.5px;width:1px;height:199px;background:#ebebeb;"></div>
<div style="position:absolute;left:632.2px;top:419.5px;width:1px;height:199px;background:#ebebeb;"></div>
<div style="position:absolute;left:663.5px;top:419.5px;width:1px;height:199px;background:#ebebeb;"></div>
<div style="position:absolute;left:695.1px;top:419.5px;width:1px;height:199px;background:#ebebeb;"></div>
<div style="position:absolute;left:726.8px;top:419.5px;width:1px;height:199px;background:#ebebeb;"></div>
<div style="position:absolute;left:758px;top:419.5px;width:1px;height:199px;background:#ebebeb;"></div>
<div style="position:absolute;left:789.3px;top:419.5px;width:1px;height:199px;background:#ebebeb;"></div>
<div style="position:absolute;left:573.5px;top:436.20000000000005px;width:239px;height:1px;background:#ececec;"></div>
<div style="position:absolute;left:573.5px;top:452.8px;width:239px;height:1px;background:#ececec;"></div>
<div style="position:absolute;left:573.5px;top:469.40000000000003px;width:239px;height:1px;background:#ececec;"></div>
<div style="position:absolute;left:573.5px;top:486.0px;width:239px;height:1px;background:#ececec;"></div>
<div style="position:absolute;left:573.5px;top:502.6px;width:239px;height:1px;background:#ececec;"></div>
<div style="position:absolute;left:573.5px;top:519.2px;width:239px;height:1px;background:#ececec;"></div>
<div style="position:absolute;left:573.5px;top:535.8000000000001px;width:239px;height:1px;background:#ececec;"></div>
<div style="position:absolute;left:573.5px;top:552.4px;width:239px;height:1px;background:#ececec;"></div>
<div style="position:absolute;left:573.5px;top:569.0px;width:239px;height:1px;background:#ececec;"></div>
<div style="position:absolute;left:573.5px;top:585.6px;width:239px;height:1px;background:#ececec;"></div>
<div style="position:absolute;left:573.5px;top:602.2px;width:239px;height:1px;background:#ececec;"></div>
<div class="t" style="right:512.6px;top:425.43px;font-size:11.3px;color:#000;font-weight:normal;text-align:right;">0</div>
<div class="t" style="left:606.5px;top:425.43px;font-size:11.3px;color:#000;font-weight:normal;">0</div>
<div class="t" style="left:638.5px;top:425.43px;font-size:11.3px;color:#000;font-weight:normal;">1</div>
<div class="t" style="left:669.8px;top:425.43px;font-size:11.3px;color:#000;font-weight:normal;">1</div>
<div class="t" style="left:701.4px;top:425.43px;font-size:11.3px;color:#000;font-weight:normal;">1</div>
<div class="t" style="left:733.0999999999999px;top:425.43px;font-size:11.3px;color:#000;font-weight:normal;">0</div>
<div class="t" style="left:764.3px;top:425.43px;font-size:11.3px;color:#000;font-weight:normal;">0</div>
<div class="t" style="left:795.5999999999999px;top:425.43px;font-size:11.3px;color:#000;font-weight:normal;">1</div>
<div class="t" style="right:512.6px;top:442.05px;font-size:11.3px;color:#000;font-weight:normal;text-align:right;">8</div>
<div class="t" style="left:606.5px;top:442.05px;font-size:11.3px;color:#000;font-weight:normal;">1</div>
<div class="t" style="left:638.5px;top:442.05px;font-size:11.3px;color:#000;font-weight:normal;">0</div>
<div class="t" style="left:669.8px;top:442.05px;font-size:11.3px;color:#000;font-weight:normal;">0</div>
<div class="t" style="left:701.4px;top:442.05px;font-size:11.3px;color:#000;font-weight:normal;">1</div>
<div class="t" style="left:733.0999999999999px;top:442.05px;font-size:11.3px;color:#000;font-weight:normal;">1</div>
<div class="t" style="left:764.3px;top:442.05px;font-size:11.3px;color:#000;font-weight:normal;">1</div>
<div class="t" style="left:795.5999999999999px;top:442.05px;font-size:11.3px;color:#000;font-weight:normal;">0</div>
<div class="t" style="right:512.6px;top:458.67px;font-size:11.3px;color:#000;font-weight:normal;text-align:right;">16</div>
<div class="t" style="left:606.5px;top:458.67px;font-size:11.3px;color:#000;font-weight:normal;">1</div>
<div class="t" style="left:638.5px;top:458.67px;font-size:11.3px;color:#000;font-weight:normal;">1</div>
<div class="t" style="left:669.8px;top:458.67px;font-size:11.3px;color:#000;font-weight:normal;">1</div>
<div class="t" style="left:701.4px;top:458.67px;font-size:11.3px;color:#000;font-weight:normal;">0</div>
<div class="t" style="left:733.0999999999999px;top:458.67px;font-size:11.3px;color:#000;font-weight:normal;">0</div>
<div class="t" style="left:764.3px;top:458.67px;font-size:11.3px;color:#000;font-weight:normal;">1</div>
<div class="t" style="left:795.5999999999999px;top:458.67px;font-size:11.3px;color:#000;font-weight:normal;">1</div>
<div class="t" style="right:512.6px;top:475.29px;font-size:11.3px;color:#000;font-weight:normal;text-align:right;">24</div>
<div class="t" style="left:606.5px;top:475.29px;font-size:11.3px;color:#000;font-weight:normal;">0</div>
<div class="t" style="left:638.5px;top:475.29px;font-size:11.3px;color:#000;font-weight:normal;">0</div>
<div class="t" style="left:669.8px;top:475.29px;font-size:11.3px;color:#000;font-weight:normal;">1</div>
<div class="t" style="left:701.4px;top:475.29px;font-size:11.3px;color:#000;font-weight:normal;">1</div>
<div class="t" style="left:733.0999999999999px;top:475.29px;font-size:11.3px;color:#000;font-weight:normal;">1</div>
<div class="t" style="left:764.3px;top:475.29px;font-size:11.3px;color:#000;font-weight:normal;">0</div>
<div class="t" style="left:795.5999999999999px;top:475.29px;font-size:11.3px;color:#000;font-weight:normal;">0</div>
<div class="t" style="right:512.6px;top:491.91px;font-size:11.3px;color:#000;font-weight:normal;text-align:right;">32</div>
<div class="t" style="left:606.5px;top:491.91px;font-size:11.3px;color:#000;font-weight:normal;">1</div>
<div class="t" style="left:638.5px;top:491.91px;font-size:11.3px;color:#000;font-weight:normal;">1</div>
<div class="t" style="left:669.8px;top:491.91px;font-size:11.3px;color:#000;font-weight:normal;">0</div>
<div class="t" style="left:701.4px;top:491.91px;font-size:11.3px;color:#000;font-weight:normal;">0</div>
<div class="t" style="left:733.0999999999999px;top:491.91px;font-size:11.3px;color:#000;font-weight:normal;">1</div>
<div class="t" style="left:764.3px;top:491.91px;font-size:11.3px;color:#000;font-weight:normal;">1</div>
<div class="t" style="left:795.5999999999999px;top:491.91px;font-size:11.3px;color:#000;font-weight:normal;">1</div>
<div class="t" style="right:512.6px;top:508.53px;font-size:11.3px;color:#000;font-weight:normal;text-align:right;">40</div>
<div class="t" style="left:606.5px;top:508.53px;font-size:11.3px;color:#000;font-weight:normal;">0</div>
<div class="t" style="left:638.5px;top:508.53px;font-size:11.3px;color:#000;font-weight:normal;">1</div>
<div class="t" style="left:669.8px;top:508.53px;font-size:11.3px;color:#000;font-weight:normal;">1</div>
<div class="t" style="left:701.4px;top:508.53px;font-size:11.3px;color:#000;font-weight:normal;">1</div>
<div class="t" style="left:733.0999999999999px;top:508.53px;font-size:11.3px;color:#000;font-weight:normal;">0</div>
<div class="t" style="left:764.3px;top:508.53px;font-size:11.3px;color:#000;font-weight:normal;">0</div>
<div class="t" style="left:795.5999999999999px;top:508.53px;font-size:11.3px;color:#000;font-weight:normal;">1</div>
<div class="t" style="right:512.6px;top:525.15px;font-size:11.3px;color:#000;font-weight:normal;text-align:right;">48</div>
<div class="t" style="left:606.5px;top:525.15px;font-size:11.3px;color:#000;font-weight:normal;">1</div>
<div class="t" style="left:638.5px;top:525.15px;font-size:11.3px;color:#000;font-weight:normal;">0</div>
<div class="t" style="left:669.8px;top:525.15px;font-size:11.3px;color:#000;font-weight:normal;">0</div>
<div class="t" style="left:701.4px;top:525.15px;font-size:11.3px;color:#000;font-weight:normal;">1</div>
<div class="t" style="left:733.0999999999999px;top:525.15px;font-size:11.3px;color:#000;font-weight:normal;">1</div>
<div class="t" style="left:764.3px;top:525.15px;font-size:11.3px;color:#000;font-weight:normal;">1</div>
<div class="t" style="left:795.5999999999999px;top:525.15px;font-size:11.3px;color:#000;font-weight:normal;">0</div>
<div class="t" style="right:512.6px;top:541.77px;font-size:11.3px;color:#000;font-weight:normal;text-align:right;">56</div>
<div class="t" style="left:606.5px;top:541.77px;font-size:11.3px;color:#000;font-weight:normal;">1</div>
<div class="t" style="left:638.5px;top:541.77px;font-size:11.3px;color:#000;font-weight:normal;">1</div>
<div class="t" style="left:669.8px;top:541.77px;font-size:11.3px;color:#000;font-weight:normal;">1</div>
<div class="t" style="left:701.4px;top:541.77px;font-size:11.3px;color:#000;font-weight:normal;">0</div>
<div class="t" style="left:733.0999999999999px;top:541.77px;font-size:11.3px;color:#000;font-weight:normal;">0</div>
<div class="t" style="left:764.3px;top:541.77px;font-size:11.3px;color:#000;font-weight:normal;">1</div>
<div class="t" style="left:795.5999999999999px;top:541.77px;font-size:11.3px;color:#000;font-weight:normal;">1</div>
<div class="t" style="right:512.6px;top:558.39px;font-size:11.3px;color:#000;font-weight:normal;text-align:right;">64</div>
<div class="t" style="left:606.5px;top:558.39px;font-size:11.3px;color:#000;font-weight:normal;">0</div>
<div class="t" style="left:638.5px;top:558.39px;font-size:11.3px;color:#000;font-weight:normal;">0</div>
<div class="t" style="left:669.8px;top:558.39px;font-size:11.3px;color:#000;font-weight:normal;">1</div>
<div class="t" style="left:701.4px;top:558.39px;font-size:11.3px;color:#000;font-weight:normal;">1</div>
<div style="position:absolute;left:573.5px;top:619px;width:239.0px;height:16.5px;background:#f0f0f0;"></div>
<div style="position:absolute;left:590.5px;top:620px;width:176.5px;height:14.5px;background:#cdcdcd;"></div>
<svg width="6" height="9" viewBox="0 0 6 9" style="left:576.5px;top:622.75px;"><path d="M5 1 L1.5 4.5 L5 8" fill="none" stroke="#333" stroke-width="1.5"/></svg>
<svg width="6" height="9" viewBox="0 0 6 9" style="left:802.5px;top:622.75px;"><path d="M1 1 L4.5 4.5 L1 8" fill="none" stroke="#333" stroke-width="1.5"/></svg>
<svg width="10" height="6" viewBox="0 0 10 6" style="left:917.5px;top:397.5px;"><path d="M0.5 0.5 H9.5 L5 5.5 Z" fill="#7a7a8a"/></svg>
<div class="t" style="left:932.9px;top:396.53px;font-size:11.3px;color:#000;font-weight:normal;">Trace 1</div>
<div style="position:absolute;left:1015px;top:395px;width:11.5px;height:11.5px;box-sizing:border-box;border:1px solid #5a8cc4;border-radius:2px;background:linear-gradient(#f4f4f4,#ffffff);"><svg width="11.5" height="11.5" style="left:-1px;top:-1px"><path d="M3 6.2 L5.2 8.6 L9.3 3.6" fill="none" stroke="#2a6cb8" stroke-width="1.5"/></svg></div>
<div class="t" style="left:1030.8px;top:397.23px;font-size:11.3px;color:#000;font-weight:normal;">Show</div>
<div style="position:absolute;left:1056.5px;top:393px;width:36.5px;height:17.5px;box-sizing:border-box;border:1px solid #3c8ad2;border-radius:3px;background:linear-gradient(#f8f8f8,#e4e4e4);overflow:hidden;"><div class="t" style="left:3px;top:3px;font-size:11.3px;color:#111">C+Peak</div></div>
<svg width="8" height="8" viewBox="0 0 8 8" style="left:831.3px;top:415.4px;"><ellipse cx="4.3" cy="3.4" rx="3.2" ry="3" fill="#b4b8c4"/><ellipse cx="4.8" cy="2.6" rx="1.6" ry="1.3" fill="#e8eaf0"/><circle cx="3" cy="2.4" r="1.4" fill="#1c9a22"/><circle cx="4.4" cy="3.2" r="0.8" fill="#e4e040"/><rect x="0" y="4.1" width="8" height="1.3" fill="#1a1a34"/><rect x="0" y="4.1" width="1.2" height="1.3" fill="#a07030"/><path d="M1.6 5.4 H6.8 L6.2 7.4 H2.2 Z" fill="#6464c8"/></svg>
<div class="t" style="left:846.4px;top:415.03px;font-size:11.3px;color:#000;font-weight:normal;">-30.00</div>
<div style="position:absolute;left:844.5px;top:433px;width:65.0px;height:18.5px;box-sizing:border-box;border:1px solid #b4b4b4;border-right:none;background:#fff;"></div>
<div style="position:absolute;left:896.5px;top:435px;width:12px;height:14.5px;box-sizing:border-box;border:1px solid #3f8ad2;border-radius:2px;background:linear-gradient(#eaf4fc,#cfe6f8);"><svg width="10" height="10" style="left:0.5px;top:2px"><path d="M2 3.5 L5 6.5 L8 3.5" fill="none" stroke="#2a5a90" stroke-width="1.4"/></svg></div>
<div class="t" style="left:848.9px;top:437.73px;font-size:11.3px;color:#111;font-weight:normal;">dBm</div>
<div class="t" style="left:843.5px;top:474.73px;font-size:11.3px;color:#000;font-weight:normal;">dB/div:</div>
<svg width="8" height="8" viewBox="0 0 8 8" style="left:831.3px;top:486.2px;"><ellipse cx="4.3" cy="3.4" rx="3.2" ry="3" fill="#b4b8c4"/><ellipse cx="4.8" cy="2.6" rx="1.6" ry="1.3" fill="#e8eaf0"/><circle cx="3" cy="2.4" r="1.4" fill="#1c9a22"/><circle cx="4.4" cy="3.2" r="0.8" fill="#e4e040"/><rect x="0" y="4.1" width="8" height="1.3" fill="#1a1a34"/><rect x="0" y="4.1" width="1.2" height="1.3" fill="#a07030"/><path d="M1.6 5.4 H6.8 L6.2 7.4 H2.2 Z" fill="#6464c8"/></svg>
<div class="t" style="left:846.8px;top:489.13px;font-size:11.3px;color:#000;font-weight:normal;">10.0 dB</div>
<div class="t" style="left:843.5px;top:511.83px;font-size:11.3px;color:#000;font-weight:normal;">RBW:</div>
<svg width="8" height="8" viewBox="0 0 8 8" style="left:831.3px;top:522.0px;"><ellipse cx="4.3" cy="3.4" rx="3.2" ry="3" fill="#b4b8c4"/><ellipse cx="4.8" cy="2.6" rx="1.6" ry="1.3" fill="#e8eaf0"/><circle cx="3" cy="2.4" r="1.4" fill="#1c9a22"/><circle cx="4.4" cy="3.2" r="0.8" fill="#e4e040"/><rect x="0" y="4.1" width="8" height="1.3" fill="#1a1a34"/><rect x="0" y="4.1" width="1.2" height="1.3" fill="#a07030"/><path d="M1.6 5.4 H6.8 L6.2 7.4 H2.2 Z" fill="#6464c8"/></svg>
<div class="t" style="left:846.8px;top:526.23px;font-size:11.3px;color:#000;font-weight:normal;">3.00 kHz</div>
<div style="position:absolute;left:836px;top:544px;width:11.5px;height:11.5px;box-sizing:border-box;border:1px solid #5a8cc4;border-radius:2px;background:linear-gradient(#f4f4f4,#ffffff);"></div>
<div class="t" style="left:853px;top:545.53px;font-size:11.3px;color:#000;font-weight:normal;">VBW:</div>
<div style="position:absolute;left:835.5px;top:625.5px;width:66.5px;height:18.5px;box-sizing:border-box;border:1px solid #3c8ad2;border-radius:3px;background:linear-gradient(#f6f6f6,#ececec 50%,#dcdcdc);"></div>
<div class="t" style="left:842px;top:630.73px;font-size:11.3px;color:#111;font-weight:normal;">Autoscale</div>
<div class="t" style="right:162px;top:409.83px;font-size:11.3px;color:#000;font-weight:normal;text-align:right;">-30.0</div>
<div style="position:absolute;left:948.5px;top:414.0px;width:3px;height:1px;background:#333;"></div>
<div class="t" style="right:162px;top:430.35px;font-size:11.3px;color:#000;font-weight:normal;text-align:right;">-40.0</div>
<div style="position:absolute;left:948.5px;top:434.4px;width:3px;height:1px;background:#333;"></div>
<div class="t" style="right:162px;top:450.87px;font-size:11.3px;color:#000;font-weight:normal;text-align:right;">-50.0</div>
<div style="position:absolute;left:948.5px;top:454.8px;width:3px;height:1px;background:#333;"></div>
<div class="t" style="right:162px;top:471.39px;font-size:11.3px;color:#000;font-weight:normal;text-align:right;">-60.0</div>
<div style="position:absolute;left:948.5px;top:475.2px;width:3px;height:1px;background:#333;"></div>
<div class="t" style="right:162px;top:491.91px;font-size:11.3px;color:#000;font-weight:normal;text-align:right;">-70.0</div>
<div style="position:absolute;left:948.5px;top:495.6px;width:3px;height:1px;background:#333;"></div>
<div class="t" style="right:162px;top:512.43px;font-size:11.3px;color:#000;font-weight:normal;text-align:right;">-80.0</div>
<div style="position:absolute;left:948.5px;top:516.0px;width:3px;height:1px;background:#333;"></div>
<div class="t" style="right:162px;top:532.95px;font-size:11.3px;color:#000;font-weight:normal;text-align:right;">-90.0</div>
<div style="position:absolute;left:948.5px;top:536.4px;width:3px;height:1px;background:#333;"></div>
<div class="t" style="right:162px;top:553.47px;font-size:11.3px;color:#000;font-weight:normal;text-align:right;">-100.0</div>
<div style="position:absolute;left:948.5px;top:556.8px;width:3px;height:1px;background:#333;"></div>
<div class="t" style="right:162px;top:573.99px;font-size:11.3px;color:#000;font-weight:normal;text-align:right;">-110.0</div>
<div style="position:absolute;left:948.5px;top:577.2px;width:3px;height:1px;background:#333;"></div>
<div class="t" style="right:162px;top:594.51px;font-size:11.3px;color:#000;font-weight:normal;text-align:right;">-120.0</div>
<div style="position:absolute;left:948.5px;top:597.6px;width:3px;height:1px;background:#333;"></div>
<div class="t" style="right:162px;top:615.03px;font-size:11.3px;color:#000;font-weight:normal;text-align:right;">-130.0</div>
<div style="position:absolute;left:948.5px;top:618.0px;width:3px;height:1px;background:#333;"></div>
<svg width="126" height="204" viewBox="0 0 126 204" style="left:958px;top:414px;"><rect x="0" y="0" width="126" height="204" fill="#000"/><line x1="13.5" y1="0" x2="13.5" y2="204" stroke="#505050" stroke-width="1"/><line x1="25.5" y1="0" x2="25.5" y2="204" stroke="#505050" stroke-width="1"/><line x1="38.5" y1="0" x2="38.5" y2="204" stroke="#505050" stroke-width="1"/><line x1="50.5" y1="0" x2="50.5" y2="204" stroke="#505050" stroke-width="1"/><line x1="63.5" y1="0" x2="63.5" y2="204" stroke="#505050" stroke-width="1"/><line x1="76.5" y1="0" x2="76.5" y2="204" stroke="#505050" stroke-width="1"/><line x1="88.5" y1="0" x2="88.5" y2="204" stroke="#505050" stroke-width="1"/><line x1="101.5" y1="0" x2="101.5" y2="204" stroke="#505050" stroke-width="1"/><line x1="113.5" y1="0" x2="113.5" y2="204" stroke="#505050" stroke-width="1"/><line x1="0" y1="20.5" x2="126" y2="20.5" stroke="#505050" stroke-width="1"/><line x1="0" y1="41.5" x2="126" y2="41.5" stroke="#505050" stroke-width="1"/><line x1="0" y1="61.5" x2="126" y2="61.5" stroke="#505050" stroke-width="1"/><line x1="0" y1="82.5" x2="126" y2="82.5" stroke="#505050" stroke-width="1"/><line x1="0" y1="102.5" x2="126" y2="102.5" stroke="#505050" stroke-width="1"/><line x1="0" y1="122.5" x2="126" y2="122.5" stroke="#505050" stroke-width="1"/><line x1="0" y1="143.5" x2="126" y2="143.5" stroke="#505050" stroke-width="1"/><line x1="0" y1="163.5" x2="126" y2="163.5" stroke="#505050" stroke-width="1"/><line x1="0" y1="184.5" x2="126" y2="184.5" stroke="#505050" stroke-width="1"/><path d="M0.00 119.4 L0.50 122.7 L1.00 122.3 L1.50 121.3 L2.00 119.6 L2.50 123.3 L3.00 123.3 L3.50 121.4 L4.00 121.4 L4.50 119.6 L5.00 118.1 L5.50 120.4 L6.00 121.8 L6.50 118.5 L7.00 123.1 L7.50 119.5 L8.00 119.5 L8.50 118.2 L9.00 124.3 L9.50 122.6 L10.00 123.5 L10.50 121.8 L11.00 118.1 L11.50 119.9 L12.00 121.0 L12.50 118.5 L13.00 123.8 L13.50 120.1 L14.00 118.7 L14.50 122.9 L15.00 118.5 L15.50 123.6 L16.00 120.5 L16.50 121.1 L17.00 119.7 L17.50 120.6 L18.00 118.7 L18.50 117.7 L19.00 123.0 L19.50 118.9 L20.00 122.4 L20.50 118.7 L21.00 123.6 L21.50 123.1 L22.00 122.1 L22.50 121.8 L23.00 120.2 L23.50 120.7 L24.00 116.4 L24.50 118.2 L25.00 120.0 L25.50 115.5 L26.00 119.7 L26.50 119.0 L27.00 115.5 L27.50 115.0 L28.00 115.5 L28.50 114.9 L29.00 118.7 L29.50 114.7 L30.00 112.2 L30.50 112.5 L31.00 116.4 L31.50 118.0 L32.00 114.7 L32.50 114.6 L33.00 114.8 L33.50 115.9 L34.00 112.5 L34.50 114.8 L35.00 114.3 L35.50 114.6 L36.00 111.7 L36.50 111.5 L37.00 112.5 L37.50 116.1 L38.00 112.2 L38.50 113.7 L39.00 111.6 L39.50 109.8 L40.00 109.1 L40.50 112.3 L41.00 111.7 L41.50 110.0 L42.00 110.5 L42.50 110.0 L43.00 110.2 L43.50 109.9 L44.00 107.7 L44.50 108.5 L45.00 107.5 L45.50 105.5 L46.00 105.5 L46.50 103.4 L47.00 102.1 L47.20 101.3 L47.50 102.3 L48.00 98.6 L48.50 98.1 L49.00 96.5 L49.50 95.0 L50.00 92.2 L50.50 89.5 L51.00 86.7 L51.40 84.5 L51.50 83.1 L52.00 76.2 L52.30 72.0 L52.50 68.0 L53.00 58.0 L53.50 50.5 L53.60 49.0 L54.00 48.1 L54.20 47.7 L54.50 49.9 L54.80 52.0 L55.00 56.0 L55.50 66.1 L56.00 70.7 L56.50 75.3 L56.80 78.0 L57.00 78.9 L57.50 81.3 L58.00 83.7 L58.50 86.0 L58.90 87.9 L59.00 88.2 L59.50 89.5 L60.00 90.8 L60.50 91.5 L61.00 94.3 L61.50 92.7 L62.00 95.5 L62.50 97.0 L63.00 94.9 L63.10 96.8 L63.50 96.7 L64.00 96.9 L64.50 95.8 L65.00 94.5 L65.50 94.6 L66.00 95.9 L66.50 93.7 L67.00 92.8 L67.50 92.0 L68.00 91.1 L68.50 90.3 L68.90 89.6 L69.00 89.1 L69.50 86.4 L70.00 83.7 L70.50 81.0 L71.00 74.6 L71.40 69.5 L71.50 66.8 L71.90 56.0 L72.00 53.7 L72.30 46.9 L72.50 49.3 L72.90 54.0 L73.00 55.4 L73.50 62.5 L74.00 69.5 L74.50 74.7 L75.00 79.8 L75.50 85.0 L76.00 87.6 L76.50 90.3 L77.00 92.9 L77.30 94.5 L77.50 95.0 L78.00 96.1 L78.50 96.5 L79.00 99.0 L79.50 99.0 L80.00 99.3 L80.50 101.5 L81.00 102.4 L81.50 104.9 L82.00 103.8 L82.50 105.1 L83.00 106.0 L83.50 107.9 L84.00 106.0 L84.50 108.2 L85.00 108.6 L85.50 110.0 L86.00 111.2 L86.50 108.8 L87.00 111.6 L87.50 110.8 L88.00 111.3 L88.50 108.4 L89.00 113.5 L89.50 114.8 L90.00 111.1 L90.50 111.2 L91.00 115.8 L91.50 110.4 L92.00 110.5 L92.50 110.8 L93.00 115.8 L93.50 115.7 L94.00 114.0 L94.50 115.4 L95.00 111.9 L95.50 116.1 L96.00 115.1 L96.50 115.9 L97.00 115.4 L97.50 115.7 L98.00 114.7 L98.50 113.7 L99.00 116.4 L99.50 115.3 L100.00 118.4 L100.50 119.3 L101.00 118.8 L101.50 117.3 L102.00 116.0 L102.50 117.1 L103.00 117.9 L103.50 119.0 L104.00 121.3 L104.50 115.8 L105.00 118.5 L105.50 118.7 L106.00 120.3 L106.50 121.6 L107.00 121.0 L107.50 120.2 L108.00 121.2 L108.50 120.8 L109.00 122.1 L109.50 121.3 L110.00 121.3 L110.50 118.7 L111.00 123.1 L111.50 119.9 L112.00 121.5 L112.50 123.0 L113.00 124.0 L113.50 124.3 L114.00 118.2 L114.50 120.3 L115.00 120.4 L115.50 121.0 L116.00 119.5 L116.50 122.3 L117.00 119.3 L117.50 120.9 L118.00 125.1 L118.50 123.9 L119.00 122.2 L119.50 120.1 L120.00 125.6 L120.50 124.1 L121.00 121.0 L121.50 122.0 L122.00 124.0 L122.50 124.4 L123.00 121.8 L123.50 126.3 L124.00 122.4 L124.50 122.1 L125.00 126.0 L125.50 121.7 L126.00 125.2" fill="none" stroke="#f2ec28" stroke-width="1.1"/><path d="M1011.2 470 V492 M1012.6 466 V486" transform="translate(-958,-414)" stroke="#c8c020" stroke-width="1"/><path d="M59 197 L62.5 203 L66 197" fill="none" stroke="#dddddd" stroke-width="1"/></svg>
<div class="t" style="left:958px;top:628.73px;font-size:11.3px;color:#111;font-weight:normal;clip-path:inset(0 0 0 1px)">top</div>
<div class="t" style="left:983.5px;top:628.73px;font-size:11.3px;color:#000;font-weight:normal;">434.180 MHz</div>
<div style="position:absolute;left:4px;top:650px;width:1099px;height:35px;background:#ffffff;"></div>
<div style="position:absolute;left:4px;top:685px;width:1099px;height:27px;box-sizing:border-box;border:1px solid #3d8fd8;background:linear-gradient(#fafafa,#e4e4e4);"></div>
<div class="t" style="left:7px;top:662.20px;font-size:13px;color:#111;font-weight:normal;">Freq Dev vs T</div>
<div class="t" style="left:111.3px;top:662.20px;font-size:13px;color:#111;font-weight:normal;">Frequency</div>
<div style="position:absolute;left:178px;top:657.5px;width:88px;height:22.5px;box-sizing:border-box;border:1px solid #ababab;background:#fff;"></div>
<div class="t" style="left:182.1px;top:662.20px;font-size:13px;color:#111;font-weight:normal;">433.930 MHz</div>
<div class="t" style="left:351.5px;top:662.20px;font-size:13px;color:#111;font-weight:normal;">Ref Lev</div>
<div style="position:absolute;left:403px;top:657.5px;width:88px;height:22.5px;box-sizing:border-box;border:1px solid #ababab;background:#fff;"></div>
<div class="t" style="left:407.2px;top:662.20px;font-size:13px;color:#111;font-weight:normal;">-30.00 dBm</div>
<div class="t" style="left:565.1px;top:662.20px;font-size:13px;color:#111;font-weight:normal;">Meas BW</div>
<div style="position:absolute;left:629px;top:657.5px;width:87.5px;height:22.5px;box-sizing:border-box;border:1px solid #ababab;background:#fff;"></div>
<div class="t" style="left:633px;top:662.20px;font-size:13px;color:#111;font-weight:normal;">200.0 kHz</div>
<div style="position:absolute;left:960px;top:657px;width:55.5px;height:22px;box-sizing:border-box;border:1px solid #3c8ad2;border-radius:2px;background:linear-gradient(#f4f4f4,#e6e6e6 50%,#d8d8d8);"></div>
<div class="t" style="left:963.5px;top:662.50px;font-size:13px;color:#111;font-weight:normal;">Markers</div>
<div style="position:absolute;left:1020px;top:657px;width:48.5px;height:22px;box-sizing:border-box;border:1px solid #3c8ad2;border-radius:2px;background:linear-gradient(#f4f4f4,#e6e6e6 50%,#d8d8d8);"></div>
<div class="t" style="left:1023.5px;top:662.50px;font-size:13px;color:#111;font-weight:normal;">Traces</div>
<div style="position:absolute;left:1072px;top:656px;width:24px;height:24px;box-sizing:border-box;border:1px solid #3c8ad2;border-radius:2px;background:linear-gradient(#f8f8f8,#e0e0e0);"></div>
<svg width="22" height="22" viewBox="0 0 22 22" style="left:1073px;top:657px;"><path d="M17.94 9.08 L20.77 8.86 L20.77 13.14 L17.94 12.92 L17.26 14.55 L19.42 16.39 L16.39 19.42 L14.55 17.26 L12.92 17.94 L13.14 20.77 L8.86 20.77 L9.08 17.94 L7.45 17.26 L5.61 19.42 L2.58 16.39 L4.74 14.55 L4.06 12.92 L1.23 13.14 L1.23 8.86 L4.06 9.08 L4.74 7.45 L2.58 5.61 L5.61 2.58 L7.45 4.74 L9.08 4.06 L8.86 1.23 L13.14 1.23 L12.92 4.06 L14.55 4.74 L16.39 2.58 L19.42 5.61 L17.26 7.45 Z" fill="#000"/><circle cx="11" cy="11" r="6.7" fill="#000"/><circle cx="11" cy="11" r="3.8" fill="#fff"/></svg>
<div style="position:absolute;left:94.6px;top:687px;width:1px;height:23px;background:#c4c4c4;"></div>
<div style="position:absolute;left:95.6px;top:687px;width:1px;height:23px;background:#ffffff;"></div>
<div style="position:absolute;left:352.5px;top:687px;width:1px;height:23px;background:#c4c4c4;"></div>
<div style="position:absolute;left:353.5px;top:687px;width:1px;height:23px;background:#ffffff;"></div>
<div style="position:absolute;left:414.8px;top:687px;width:1px;height:23px;background:#c4c4c4;"></div>
<div style="position:absolute;left:415.8px;top:687px;width:1px;height:23px;background:#ffffff;"></div>
<div style="position:absolute;left:511.9px;top:687px;width:1px;height:23px;background:#c4c4c4;"></div>
<div style="position:absolute;left:512.9px;top:687px;width:1px;height:23px;background:#ffffff;"></div>
<div style="position:absolute;left:576.2px;top:687px;width:1px;height:23px;background:#c4c4c4;"></div>
<div style="position:absolute;left:577.2px;top:687px;width:1px;height:23px;background:#ffffff;"></div>
<div style="position:absolute;left:650.7px;top:687px;width:1px;height:23px;background:#c4c4c4;"></div>
<div style="position:absolute;left:651.7px;top:687px;width:1px;height:23px;background:#ffffff;"></div>
<div style="position:absolute;left:725.1px;top:687px;width:1px;height:23px;background:#c4c4c4;"></div>
<div style="position:absolute;left:726.1px;top:687px;width:1px;height:23px;background:#ffffff;"></div>
<div style="position:absolute;left:775.5px;top:687px;width:1px;height:23px;background:#c4c4c4;"></div>
<div style="position:absolute;left:776.5px;top:687px;width:1px;height:23px;background:#ffffff;"></div>
<div class="t" style="left:11.1px;top:693.83px;font-size:10.6px;color:#111;font-weight:normal;">Stopped</div>
<div class="t" style="left:100.2px;top:693.83px;font-size:10.6px;color:#111;font-weight:normal;">Acq BW: 625.00 kHz, Acq Length: 13.886 ms</div>
<svg width="20" height="19" viewBox="0 0 20 19" style="left:1073px;top:689px;"><path d="M2.5 16.5 Q3 12 6.5 8 L11 12.5 Q7 16 2.5 16.5 Z" fill="#ee1c1c" stroke="#3a2424" stroke-width="0.9" stroke-linejoin="round"/><path d="M17 2.5 Q16.5 7 13 11 L8.5 6.5 Q12.5 3 17 2.5 Z" fill="#ee1c1c" stroke="#3a2424" stroke-width="0.9" stroke-linejoin="round"/></svg>
</body></html>
